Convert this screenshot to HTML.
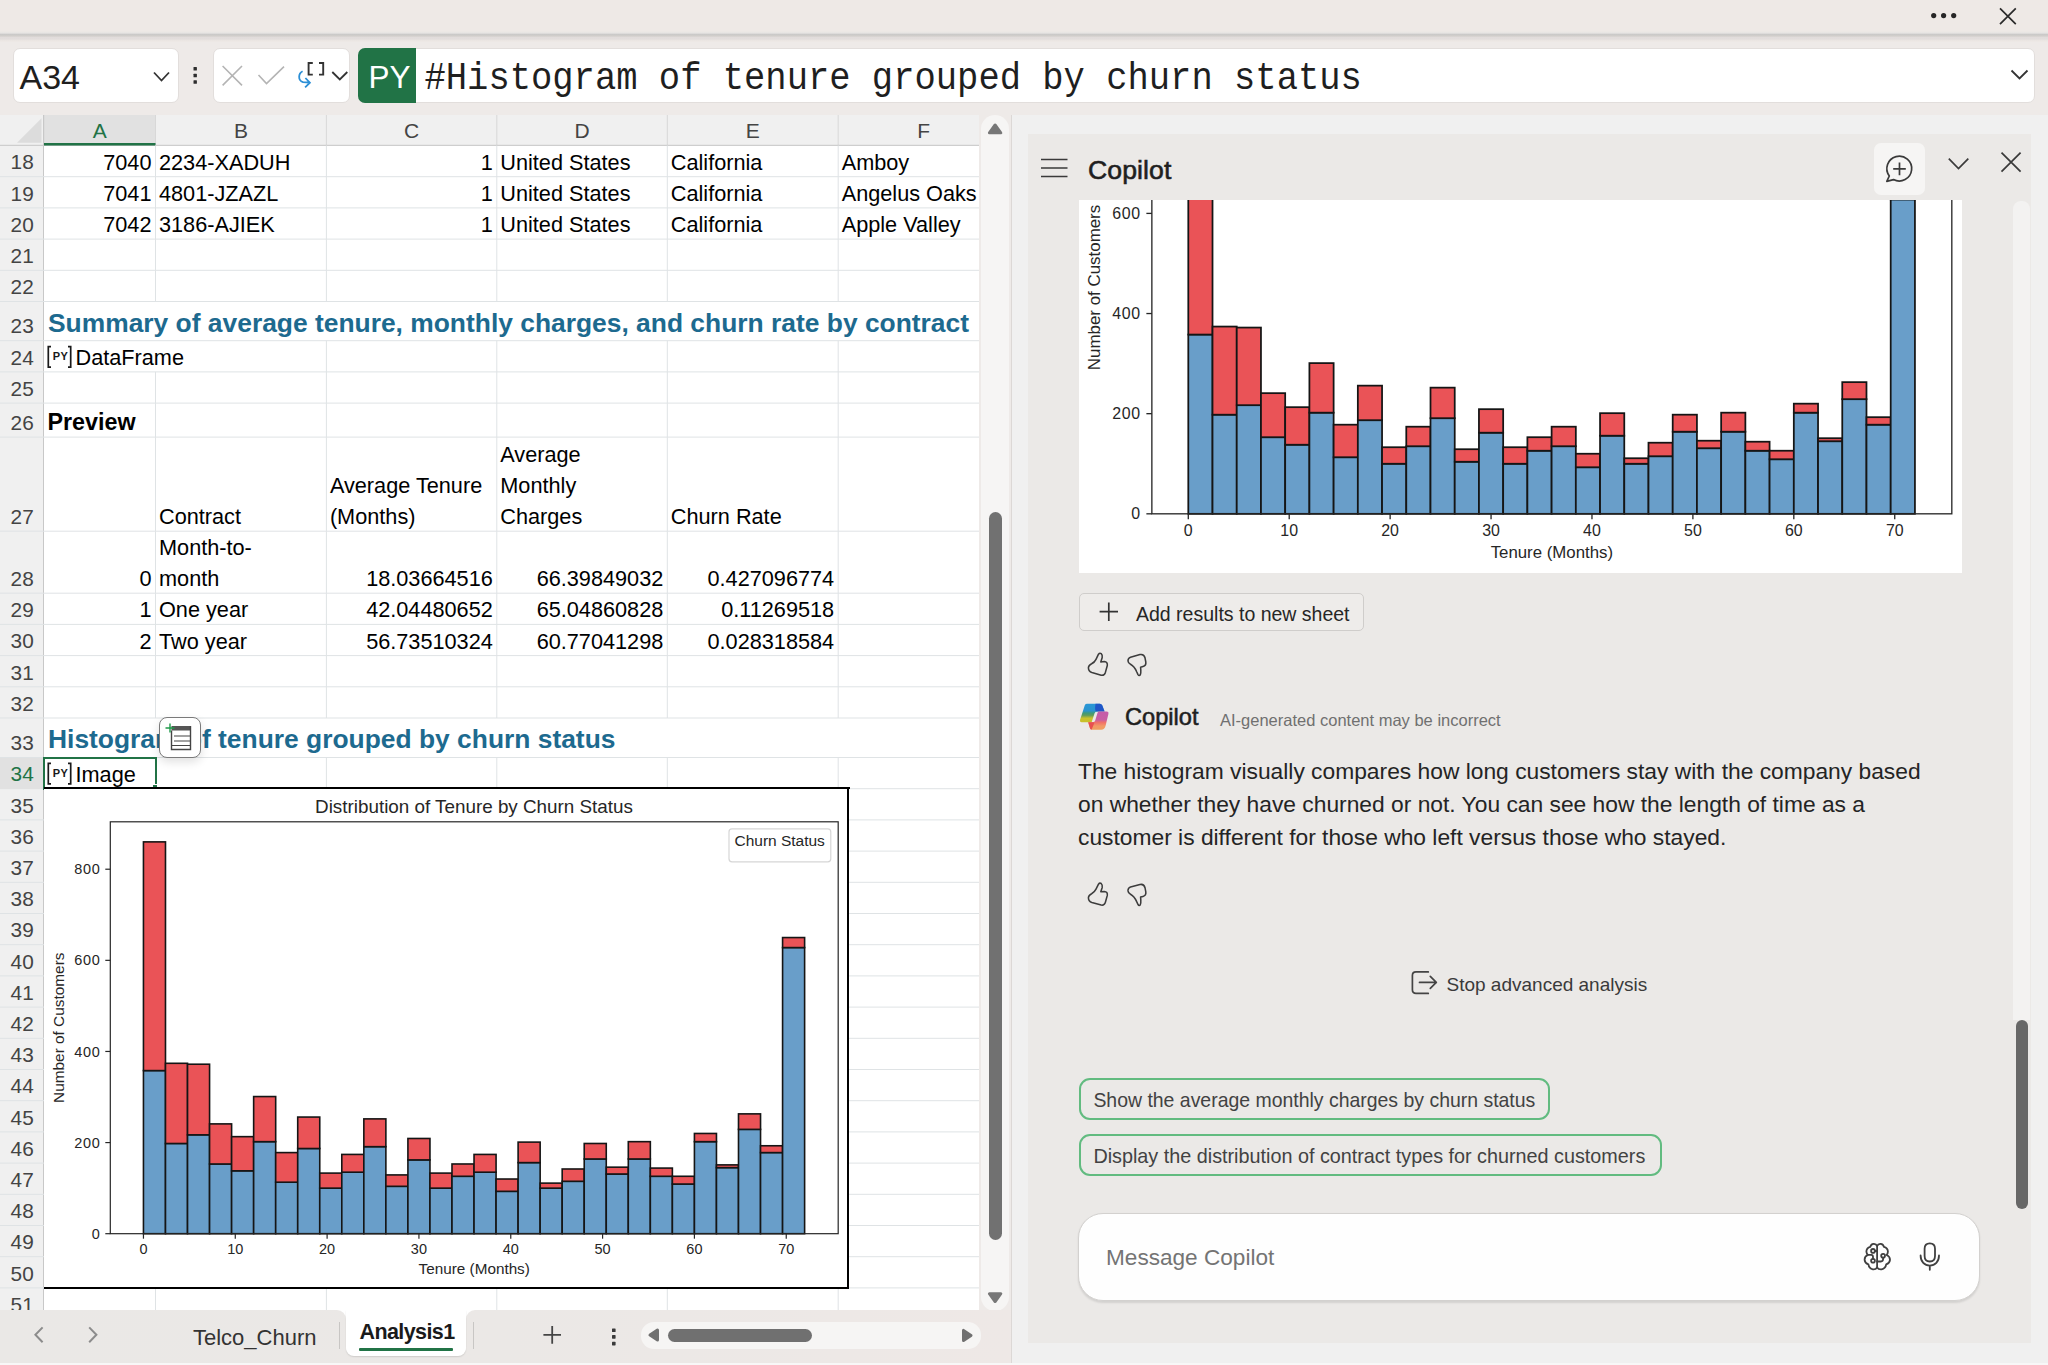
<!DOCTYPE html><html><head><meta charset="utf-8"><style>
html,body{margin:0;padding:0;}
body{width:2048px;height:1365px;position:relative;overflow:hidden;background:#eeeae8;font-family:'Liberation Sans', sans-serif;}
div{box-sizing:border-box;}
svg{position:absolute;overflow:visible;}
</style></head><body>
<div style="position:absolute;left:0px;top:0px;width:2048px;height:31px;background:#eee9e6;"></div>
<div style="position:absolute;left:0px;top:31px;width:2048px;height:11px;background:linear-gradient(#eee9e6 0px,#e6e4e3 2px,#c9c8c7 3.6px,#d3cfcc 5px,#e1dcdb 6.5px,#e2dddc 8px,#ede8e5 10px);"></div>
<svg style="left:0;top:0" width="2048" height="42">
<circle cx="1933.7" cy="15.6" r="2.6" fill="#262626"/><circle cx="1943.6" cy="15.6" r="2.6" fill="#262626"/><circle cx="1953.7" cy="15.6" r="2.6" fill="#262626"/>
<path d="M2000 8.3 L2015.8 24.2 M2015.8 8.3 L2000 24.2" stroke="#2b2b2b" stroke-width="1.7" fill="none"/>
</svg>
<div style="position:absolute;left:13.3px;top:48px;width:165.5px;height:55px;background:#fff;border:1px solid #e2dedc;border-radius:7px;"></div>
<div style="position:absolute;left:19.5px;top:60.01px;font:normal 34px 'Liberation Sans', sans-serif;color:#1f1f1f;white-space:pre;line-height:1;">A34</div>
<svg style="left:0;top:0" width="420" height="110">
<path d="M154 72.5 L161.5 80.5 L169 72.5" stroke="#333" stroke-width="1.8" fill="none"/>
<rect x="193.5" y="67.1" width="3.4" height="3.4" rx="0.5" fill="#2e2e2e"/><rect x="193.5" y="73.8" width="3.4" height="3.4" rx="0.5" fill="#2e2e2e"/><rect x="193.5" y="80.3" width="3.4" height="3.4" rx="0.5" fill="#2e2e2e"/>
</svg>
<div style="position:absolute;left:212.7px;top:48px;width:137px;height:55px;background:#fff;border:1px solid #e2dedc;border-radius:7px;"></div>
<svg style="left:0;top:0" width="420" height="110">
<path d="M222.6 66 L242 85.4 M242 66 L222.6 85.4" stroke="#b4b4b4" stroke-width="1.6" fill="none"/>
<path d="M258.5 75 L266.5 83.5 L284 66.6" stroke="#b4b4b4" stroke-width="1.6" fill="none"/>
<path d="M302.6 71.3 C298.3 73.5 297.6 80.3 303 82.2 L309.8 82.7 M305.4 78 L309.9 82.7 L305.1 87.3" stroke="#2b8fd6" stroke-width="1.8" fill="none"/>
<path d="M312.8 63 L308.6 63 L308.6 74.6 L312.8 74.6 M319 63 L323.2 63 L323.2 74.6 L319 74.6" stroke="#333" stroke-width="1.9" fill="none"/>
<path d="M332.3 72 L339.8 79.5 L347.3 72" stroke="#333" stroke-width="1.8" fill="none"/>
</svg>
<div style="position:absolute;left:357.9px;top:47.8px;width:1677px;height:55.2px;background:#fff;border:1px solid #e2dedc;border-radius:7px;"></div>
<div style="position:absolute;left:357.9px;top:47.8px;width:58.1px;height:55.2px;background:#217346;border-radius:7px 0 0 7px;"></div>
<div style="position:absolute;left:368.5px;top:61.73px;font:normal 31.5px 'Liberation Sans', sans-serif;color:#fff;white-space:pre;line-height:1;">PY</div>
<div style="position:absolute;left:424.5px;top:62.0px;font:normal 35.5px 'Liberation Mono', monospace;color:#1f1f1f;white-space:pre;line-height:1;transform:scaleY(1.08);transform-origin:0 27.2px;">#Histogram of tenure grouped by churn status</div>
<svg style="left:0;top:0" width="2048" height="110">
<path d="M2011.5 70.5 L2019.5 78.5 L2027.5 70.5" stroke="#333" stroke-width="1.8" fill="none"/>
</svg>
<div style="position:absolute;left:0px;top:115px;width:979px;height:1195px;background:#fff;overflow:hidden;"></div>
<div style="position:absolute;left:0px;top:115px;width:979px;height:30.5px;background:#f0f0f0;"></div>
<div style="position:absolute;left:0px;top:145.5px;width:44px;height:1164.5px;background:#f0f0f0;"></div>
<div style="position:absolute;left:44px;top:115px;width:111.5px;height:30.5px;background:#e1e1e1;"></div>
<svg style="left:0;top:0" width="60" height="150"><path d="M41.5 118.3 L41.5 142.7 L17 142.7 Z" fill="#dcdcdc"/></svg>
<svg style="left:0;top:0;overflow:hidden" width="979" height="1310">
<line x1="44" y1="115" x2="44" y2="145.5" stroke="#d8d8d8" stroke-width="1"/>
<line x1="155.5" y1="115" x2="155.5" y2="145.5" stroke="#d8d8d8" stroke-width="1"/>
<line x1="326.4" y1="115" x2="326.4" y2="145.5" stroke="#d8d8d8" stroke-width="1"/>
<line x1="496.8" y1="115" x2="496.8" y2="145.5" stroke="#d8d8d8" stroke-width="1"/>
<line x1="667.3" y1="115" x2="667.3" y2="145.5" stroke="#d8d8d8" stroke-width="1"/>
<line x1="838.2" y1="115" x2="838.2" y2="145.5" stroke="#d8d8d8" stroke-width="1"/>
<line x1="0" y1="145.3" x2="979" y2="145.3" stroke="#c6c6c6" stroke-width="1"/>
<rect x="44" y="143.0" width="111.5" height="2.5" fill="#217346"/>
<line x1="43.5" y1="115" x2="43.5" y2="1310" stroke="#c8c8c8" stroke-width="1"/>
<line x1="0" y1="176.7" x2="979" y2="176.7" stroke="#dfe3e5" stroke-width="1"/>
<line x1="0" y1="207.89999999999998" x2="979" y2="207.89999999999998" stroke="#dfe3e5" stroke-width="1"/>
<line x1="0" y1="239.09999999999997" x2="979" y2="239.09999999999997" stroke="#dfe3e5" stroke-width="1"/>
<line x1="0" y1="270.29999999999995" x2="979" y2="270.29999999999995" stroke="#dfe3e5" stroke-width="1"/>
<line x1="0" y1="301.49999999999994" x2="979" y2="301.49999999999994" stroke="#dfe3e5" stroke-width="1"/>
<line x1="0" y1="340.69999999999993" x2="979" y2="340.69999999999993" stroke="#dfe3e5" stroke-width="1"/>
<line x1="0" y1="371.8999999999999" x2="979" y2="371.8999999999999" stroke="#dfe3e5" stroke-width="1"/>
<line x1="0" y1="403.0999999999999" x2="979" y2="403.0999999999999" stroke="#dfe3e5" stroke-width="1"/>
<line x1="0" y1="437.0999999999999" x2="979" y2="437.0999999999999" stroke="#dfe3e5" stroke-width="1"/>
<line x1="0" y1="531.1999999999999" x2="979" y2="531.1999999999999" stroke="#dfe3e5" stroke-width="1"/>
<line x1="0" y1="593.1999999999999" x2="979" y2="593.1999999999999" stroke="#dfe3e5" stroke-width="1"/>
<line x1="0" y1="624.4" x2="979" y2="624.4" stroke="#dfe3e5" stroke-width="1"/>
<line x1="0" y1="655.6" x2="979" y2="655.6" stroke="#dfe3e5" stroke-width="1"/>
<line x1="0" y1="686.8000000000001" x2="979" y2="686.8000000000001" stroke="#dfe3e5" stroke-width="1"/>
<line x1="0" y1="718.0000000000001" x2="979" y2="718.0000000000001" stroke="#dfe3e5" stroke-width="1"/>
<line x1="0" y1="757.5000000000001" x2="979" y2="757.5000000000001" stroke="#dfe3e5" stroke-width="1"/>
<line x1="0" y1="788.7000000000002" x2="979" y2="788.7000000000002" stroke="#dfe3e5" stroke-width="1"/>
<line x1="0" y1="819.9000000000002" x2="979" y2="819.9000000000002" stroke="#dfe3e5" stroke-width="1"/>
<line x1="0" y1="851.1000000000003" x2="979" y2="851.1000000000003" stroke="#dfe3e5" stroke-width="1"/>
<line x1="0" y1="882.3000000000003" x2="979" y2="882.3000000000003" stroke="#dfe3e5" stroke-width="1"/>
<line x1="0" y1="913.5000000000003" x2="979" y2="913.5000000000003" stroke="#dfe3e5" stroke-width="1"/>
<line x1="0" y1="944.7000000000004" x2="979" y2="944.7000000000004" stroke="#dfe3e5" stroke-width="1"/>
<line x1="0" y1="975.9000000000004" x2="979" y2="975.9000000000004" stroke="#dfe3e5" stroke-width="1"/>
<line x1="0" y1="1007.1000000000005" x2="979" y2="1007.1000000000005" stroke="#dfe3e5" stroke-width="1"/>
<line x1="0" y1="1038.3000000000004" x2="979" y2="1038.3000000000004" stroke="#dfe3e5" stroke-width="1"/>
<line x1="0" y1="1069.5000000000005" x2="979" y2="1069.5000000000005" stroke="#dfe3e5" stroke-width="1"/>
<line x1="0" y1="1100.7000000000005" x2="979" y2="1100.7000000000005" stroke="#dfe3e5" stroke-width="1"/>
<line x1="0" y1="1131.9000000000005" x2="979" y2="1131.9000000000005" stroke="#dfe3e5" stroke-width="1"/>
<line x1="0" y1="1163.1000000000006" x2="979" y2="1163.1000000000006" stroke="#dfe3e5" stroke-width="1"/>
<line x1="0" y1="1194.3000000000006" x2="979" y2="1194.3000000000006" stroke="#dfe3e5" stroke-width="1"/>
<line x1="0" y1="1225.5000000000007" x2="979" y2="1225.5000000000007" stroke="#dfe3e5" stroke-width="1"/>
<line x1="0" y1="1256.7000000000007" x2="979" y2="1256.7000000000007" stroke="#dfe3e5" stroke-width="1"/>
<line x1="0" y1="1287.9000000000008" x2="979" y2="1287.9000000000008" stroke="#dfe3e5" stroke-width="1"/>
<line x1="0" y1="1319.1000000000008" x2="979" y2="1319.1000000000008" stroke="#dfe3e5" stroke-width="1"/>
<line x1="155.5" y1="145.5" x2="155.5" y2="176.7" stroke="#dfe3e5" stroke-width="1"/>
<line x1="326.4" y1="145.5" x2="326.4" y2="176.7" stroke="#dfe3e5" stroke-width="1"/>
<line x1="496.8" y1="145.5" x2="496.8" y2="176.7" stroke="#dfe3e5" stroke-width="1"/>
<line x1="667.3" y1="145.5" x2="667.3" y2="176.7" stroke="#dfe3e5" stroke-width="1"/>
<line x1="838.2" y1="145.5" x2="838.2" y2="176.7" stroke="#dfe3e5" stroke-width="1"/>
<line x1="155.5" y1="176.7" x2="155.5" y2="207.89999999999998" stroke="#dfe3e5" stroke-width="1"/>
<line x1="326.4" y1="176.7" x2="326.4" y2="207.89999999999998" stroke="#dfe3e5" stroke-width="1"/>
<line x1="496.8" y1="176.7" x2="496.8" y2="207.89999999999998" stroke="#dfe3e5" stroke-width="1"/>
<line x1="667.3" y1="176.7" x2="667.3" y2="207.89999999999998" stroke="#dfe3e5" stroke-width="1"/>
<line x1="838.2" y1="176.7" x2="838.2" y2="207.89999999999998" stroke="#dfe3e5" stroke-width="1"/>
<line x1="155.5" y1="207.89999999999998" x2="155.5" y2="239.09999999999997" stroke="#dfe3e5" stroke-width="1"/>
<line x1="326.4" y1="207.89999999999998" x2="326.4" y2="239.09999999999997" stroke="#dfe3e5" stroke-width="1"/>
<line x1="496.8" y1="207.89999999999998" x2="496.8" y2="239.09999999999997" stroke="#dfe3e5" stroke-width="1"/>
<line x1="667.3" y1="207.89999999999998" x2="667.3" y2="239.09999999999997" stroke="#dfe3e5" stroke-width="1"/>
<line x1="838.2" y1="207.89999999999998" x2="838.2" y2="239.09999999999997" stroke="#dfe3e5" stroke-width="1"/>
<line x1="155.5" y1="239.09999999999997" x2="155.5" y2="270.29999999999995" stroke="#dfe3e5" stroke-width="1"/>
<line x1="326.4" y1="239.09999999999997" x2="326.4" y2="270.29999999999995" stroke="#dfe3e5" stroke-width="1"/>
<line x1="496.8" y1="239.09999999999997" x2="496.8" y2="270.29999999999995" stroke="#dfe3e5" stroke-width="1"/>
<line x1="667.3" y1="239.09999999999997" x2="667.3" y2="270.29999999999995" stroke="#dfe3e5" stroke-width="1"/>
<line x1="838.2" y1="239.09999999999997" x2="838.2" y2="270.29999999999995" stroke="#dfe3e5" stroke-width="1"/>
<line x1="155.5" y1="270.29999999999995" x2="155.5" y2="301.49999999999994" stroke="#dfe3e5" stroke-width="1"/>
<line x1="326.4" y1="270.29999999999995" x2="326.4" y2="301.49999999999994" stroke="#dfe3e5" stroke-width="1"/>
<line x1="496.8" y1="270.29999999999995" x2="496.8" y2="301.49999999999994" stroke="#dfe3e5" stroke-width="1"/>
<line x1="667.3" y1="270.29999999999995" x2="667.3" y2="301.49999999999994" stroke="#dfe3e5" stroke-width="1"/>
<line x1="838.2" y1="270.29999999999995" x2="838.2" y2="301.49999999999994" stroke="#dfe3e5" stroke-width="1"/>
<line x1="326.4" y1="340.69999999999993" x2="326.4" y2="371.8999999999999" stroke="#dfe3e5" stroke-width="1"/>
<line x1="496.8" y1="340.69999999999993" x2="496.8" y2="371.8999999999999" stroke="#dfe3e5" stroke-width="1"/>
<line x1="667.3" y1="340.69999999999993" x2="667.3" y2="371.8999999999999" stroke="#dfe3e5" stroke-width="1"/>
<line x1="838.2" y1="340.69999999999993" x2="838.2" y2="371.8999999999999" stroke="#dfe3e5" stroke-width="1"/>
<line x1="155.5" y1="371.8999999999999" x2="155.5" y2="403.0999999999999" stroke="#dfe3e5" stroke-width="1"/>
<line x1="326.4" y1="371.8999999999999" x2="326.4" y2="403.0999999999999" stroke="#dfe3e5" stroke-width="1"/>
<line x1="496.8" y1="371.8999999999999" x2="496.8" y2="403.0999999999999" stroke="#dfe3e5" stroke-width="1"/>
<line x1="667.3" y1="371.8999999999999" x2="667.3" y2="403.0999999999999" stroke="#dfe3e5" stroke-width="1"/>
<line x1="838.2" y1="371.8999999999999" x2="838.2" y2="403.0999999999999" stroke="#dfe3e5" stroke-width="1"/>
<line x1="155.5" y1="403.0999999999999" x2="155.5" y2="437.0999999999999" stroke="#dfe3e5" stroke-width="1"/>
<line x1="326.4" y1="403.0999999999999" x2="326.4" y2="437.0999999999999" stroke="#dfe3e5" stroke-width="1"/>
<line x1="496.8" y1="403.0999999999999" x2="496.8" y2="437.0999999999999" stroke="#dfe3e5" stroke-width="1"/>
<line x1="667.3" y1="403.0999999999999" x2="667.3" y2="437.0999999999999" stroke="#dfe3e5" stroke-width="1"/>
<line x1="838.2" y1="403.0999999999999" x2="838.2" y2="437.0999999999999" stroke="#dfe3e5" stroke-width="1"/>
<line x1="155.5" y1="437.0999999999999" x2="155.5" y2="531.1999999999999" stroke="#dfe3e5" stroke-width="1"/>
<line x1="326.4" y1="437.0999999999999" x2="326.4" y2="531.1999999999999" stroke="#dfe3e5" stroke-width="1"/>
<line x1="496.8" y1="437.0999999999999" x2="496.8" y2="531.1999999999999" stroke="#dfe3e5" stroke-width="1"/>
<line x1="667.3" y1="437.0999999999999" x2="667.3" y2="531.1999999999999" stroke="#dfe3e5" stroke-width="1"/>
<line x1="838.2" y1="437.0999999999999" x2="838.2" y2="531.1999999999999" stroke="#dfe3e5" stroke-width="1"/>
<line x1="155.5" y1="531.1999999999999" x2="155.5" y2="593.1999999999999" stroke="#dfe3e5" stroke-width="1"/>
<line x1="326.4" y1="531.1999999999999" x2="326.4" y2="593.1999999999999" stroke="#dfe3e5" stroke-width="1"/>
<line x1="496.8" y1="531.1999999999999" x2="496.8" y2="593.1999999999999" stroke="#dfe3e5" stroke-width="1"/>
<line x1="667.3" y1="531.1999999999999" x2="667.3" y2="593.1999999999999" stroke="#dfe3e5" stroke-width="1"/>
<line x1="838.2" y1="531.1999999999999" x2="838.2" y2="593.1999999999999" stroke="#dfe3e5" stroke-width="1"/>
<line x1="155.5" y1="593.1999999999999" x2="155.5" y2="624.4" stroke="#dfe3e5" stroke-width="1"/>
<line x1="326.4" y1="593.1999999999999" x2="326.4" y2="624.4" stroke="#dfe3e5" stroke-width="1"/>
<line x1="496.8" y1="593.1999999999999" x2="496.8" y2="624.4" stroke="#dfe3e5" stroke-width="1"/>
<line x1="667.3" y1="593.1999999999999" x2="667.3" y2="624.4" stroke="#dfe3e5" stroke-width="1"/>
<line x1="838.2" y1="593.1999999999999" x2="838.2" y2="624.4" stroke="#dfe3e5" stroke-width="1"/>
<line x1="155.5" y1="624.4" x2="155.5" y2="655.6" stroke="#dfe3e5" stroke-width="1"/>
<line x1="326.4" y1="624.4" x2="326.4" y2="655.6" stroke="#dfe3e5" stroke-width="1"/>
<line x1="496.8" y1="624.4" x2="496.8" y2="655.6" stroke="#dfe3e5" stroke-width="1"/>
<line x1="667.3" y1="624.4" x2="667.3" y2="655.6" stroke="#dfe3e5" stroke-width="1"/>
<line x1="838.2" y1="624.4" x2="838.2" y2="655.6" stroke="#dfe3e5" stroke-width="1"/>
<line x1="155.5" y1="655.6" x2="155.5" y2="686.8000000000001" stroke="#dfe3e5" stroke-width="1"/>
<line x1="326.4" y1="655.6" x2="326.4" y2="686.8000000000001" stroke="#dfe3e5" stroke-width="1"/>
<line x1="496.8" y1="655.6" x2="496.8" y2="686.8000000000001" stroke="#dfe3e5" stroke-width="1"/>
<line x1="667.3" y1="655.6" x2="667.3" y2="686.8000000000001" stroke="#dfe3e5" stroke-width="1"/>
<line x1="838.2" y1="655.6" x2="838.2" y2="686.8000000000001" stroke="#dfe3e5" stroke-width="1"/>
<line x1="155.5" y1="686.8000000000001" x2="155.5" y2="718.0000000000001" stroke="#dfe3e5" stroke-width="1"/>
<line x1="326.4" y1="686.8000000000001" x2="326.4" y2="718.0000000000001" stroke="#dfe3e5" stroke-width="1"/>
<line x1="496.8" y1="686.8000000000001" x2="496.8" y2="718.0000000000001" stroke="#dfe3e5" stroke-width="1"/>
<line x1="667.3" y1="686.8000000000001" x2="667.3" y2="718.0000000000001" stroke="#dfe3e5" stroke-width="1"/>
<line x1="838.2" y1="686.8000000000001" x2="838.2" y2="718.0000000000001" stroke="#dfe3e5" stroke-width="1"/>
<line x1="155.5" y1="757.5000000000001" x2="155.5" y2="788.7000000000002" stroke="#dfe3e5" stroke-width="1"/>
<line x1="326.4" y1="757.5000000000001" x2="326.4" y2="788.7000000000002" stroke="#dfe3e5" stroke-width="1"/>
<line x1="496.8" y1="757.5000000000001" x2="496.8" y2="788.7000000000002" stroke="#dfe3e5" stroke-width="1"/>
<line x1="667.3" y1="757.5000000000001" x2="667.3" y2="788.7000000000002" stroke="#dfe3e5" stroke-width="1"/>
<line x1="838.2" y1="757.5000000000001" x2="838.2" y2="788.7000000000002" stroke="#dfe3e5" stroke-width="1"/>
<line x1="155.5" y1="788.7000000000002" x2="155.5" y2="819.9000000000002" stroke="#dfe3e5" stroke-width="1"/>
<line x1="326.4" y1="788.7000000000002" x2="326.4" y2="819.9000000000002" stroke="#dfe3e5" stroke-width="1"/>
<line x1="496.8" y1="788.7000000000002" x2="496.8" y2="819.9000000000002" stroke="#dfe3e5" stroke-width="1"/>
<line x1="667.3" y1="788.7000000000002" x2="667.3" y2="819.9000000000002" stroke="#dfe3e5" stroke-width="1"/>
<line x1="838.2" y1="788.7000000000002" x2="838.2" y2="819.9000000000002" stroke="#dfe3e5" stroke-width="1"/>
<line x1="155.5" y1="819.9000000000002" x2="155.5" y2="851.1000000000003" stroke="#dfe3e5" stroke-width="1"/>
<line x1="326.4" y1="819.9000000000002" x2="326.4" y2="851.1000000000003" stroke="#dfe3e5" stroke-width="1"/>
<line x1="496.8" y1="819.9000000000002" x2="496.8" y2="851.1000000000003" stroke="#dfe3e5" stroke-width="1"/>
<line x1="667.3" y1="819.9000000000002" x2="667.3" y2="851.1000000000003" stroke="#dfe3e5" stroke-width="1"/>
<line x1="838.2" y1="819.9000000000002" x2="838.2" y2="851.1000000000003" stroke="#dfe3e5" stroke-width="1"/>
<line x1="155.5" y1="851.1000000000003" x2="155.5" y2="882.3000000000003" stroke="#dfe3e5" stroke-width="1"/>
<line x1="326.4" y1="851.1000000000003" x2="326.4" y2="882.3000000000003" stroke="#dfe3e5" stroke-width="1"/>
<line x1="496.8" y1="851.1000000000003" x2="496.8" y2="882.3000000000003" stroke="#dfe3e5" stroke-width="1"/>
<line x1="667.3" y1="851.1000000000003" x2="667.3" y2="882.3000000000003" stroke="#dfe3e5" stroke-width="1"/>
<line x1="838.2" y1="851.1000000000003" x2="838.2" y2="882.3000000000003" stroke="#dfe3e5" stroke-width="1"/>
<line x1="155.5" y1="882.3000000000003" x2="155.5" y2="913.5000000000003" stroke="#dfe3e5" stroke-width="1"/>
<line x1="326.4" y1="882.3000000000003" x2="326.4" y2="913.5000000000003" stroke="#dfe3e5" stroke-width="1"/>
<line x1="496.8" y1="882.3000000000003" x2="496.8" y2="913.5000000000003" stroke="#dfe3e5" stroke-width="1"/>
<line x1="667.3" y1="882.3000000000003" x2="667.3" y2="913.5000000000003" stroke="#dfe3e5" stroke-width="1"/>
<line x1="838.2" y1="882.3000000000003" x2="838.2" y2="913.5000000000003" stroke="#dfe3e5" stroke-width="1"/>
<line x1="155.5" y1="913.5000000000003" x2="155.5" y2="944.7000000000004" stroke="#dfe3e5" stroke-width="1"/>
<line x1="326.4" y1="913.5000000000003" x2="326.4" y2="944.7000000000004" stroke="#dfe3e5" stroke-width="1"/>
<line x1="496.8" y1="913.5000000000003" x2="496.8" y2="944.7000000000004" stroke="#dfe3e5" stroke-width="1"/>
<line x1="667.3" y1="913.5000000000003" x2="667.3" y2="944.7000000000004" stroke="#dfe3e5" stroke-width="1"/>
<line x1="838.2" y1="913.5000000000003" x2="838.2" y2="944.7000000000004" stroke="#dfe3e5" stroke-width="1"/>
<line x1="155.5" y1="944.7000000000004" x2="155.5" y2="975.9000000000004" stroke="#dfe3e5" stroke-width="1"/>
<line x1="326.4" y1="944.7000000000004" x2="326.4" y2="975.9000000000004" stroke="#dfe3e5" stroke-width="1"/>
<line x1="496.8" y1="944.7000000000004" x2="496.8" y2="975.9000000000004" stroke="#dfe3e5" stroke-width="1"/>
<line x1="667.3" y1="944.7000000000004" x2="667.3" y2="975.9000000000004" stroke="#dfe3e5" stroke-width="1"/>
<line x1="838.2" y1="944.7000000000004" x2="838.2" y2="975.9000000000004" stroke="#dfe3e5" stroke-width="1"/>
<line x1="155.5" y1="975.9000000000004" x2="155.5" y2="1007.1000000000005" stroke="#dfe3e5" stroke-width="1"/>
<line x1="326.4" y1="975.9000000000004" x2="326.4" y2="1007.1000000000005" stroke="#dfe3e5" stroke-width="1"/>
<line x1="496.8" y1="975.9000000000004" x2="496.8" y2="1007.1000000000005" stroke="#dfe3e5" stroke-width="1"/>
<line x1="667.3" y1="975.9000000000004" x2="667.3" y2="1007.1000000000005" stroke="#dfe3e5" stroke-width="1"/>
<line x1="838.2" y1="975.9000000000004" x2="838.2" y2="1007.1000000000005" stroke="#dfe3e5" stroke-width="1"/>
<line x1="155.5" y1="1007.1000000000005" x2="155.5" y2="1038.3000000000004" stroke="#dfe3e5" stroke-width="1"/>
<line x1="326.4" y1="1007.1000000000005" x2="326.4" y2="1038.3000000000004" stroke="#dfe3e5" stroke-width="1"/>
<line x1="496.8" y1="1007.1000000000005" x2="496.8" y2="1038.3000000000004" stroke="#dfe3e5" stroke-width="1"/>
<line x1="667.3" y1="1007.1000000000005" x2="667.3" y2="1038.3000000000004" stroke="#dfe3e5" stroke-width="1"/>
<line x1="838.2" y1="1007.1000000000005" x2="838.2" y2="1038.3000000000004" stroke="#dfe3e5" stroke-width="1"/>
<line x1="155.5" y1="1038.3000000000004" x2="155.5" y2="1069.5000000000005" stroke="#dfe3e5" stroke-width="1"/>
<line x1="326.4" y1="1038.3000000000004" x2="326.4" y2="1069.5000000000005" stroke="#dfe3e5" stroke-width="1"/>
<line x1="496.8" y1="1038.3000000000004" x2="496.8" y2="1069.5000000000005" stroke="#dfe3e5" stroke-width="1"/>
<line x1="667.3" y1="1038.3000000000004" x2="667.3" y2="1069.5000000000005" stroke="#dfe3e5" stroke-width="1"/>
<line x1="838.2" y1="1038.3000000000004" x2="838.2" y2="1069.5000000000005" stroke="#dfe3e5" stroke-width="1"/>
<line x1="155.5" y1="1069.5000000000005" x2="155.5" y2="1100.7000000000005" stroke="#dfe3e5" stroke-width="1"/>
<line x1="326.4" y1="1069.5000000000005" x2="326.4" y2="1100.7000000000005" stroke="#dfe3e5" stroke-width="1"/>
<line x1="496.8" y1="1069.5000000000005" x2="496.8" y2="1100.7000000000005" stroke="#dfe3e5" stroke-width="1"/>
<line x1="667.3" y1="1069.5000000000005" x2="667.3" y2="1100.7000000000005" stroke="#dfe3e5" stroke-width="1"/>
<line x1="838.2" y1="1069.5000000000005" x2="838.2" y2="1100.7000000000005" stroke="#dfe3e5" stroke-width="1"/>
<line x1="155.5" y1="1100.7000000000005" x2="155.5" y2="1131.9000000000005" stroke="#dfe3e5" stroke-width="1"/>
<line x1="326.4" y1="1100.7000000000005" x2="326.4" y2="1131.9000000000005" stroke="#dfe3e5" stroke-width="1"/>
<line x1="496.8" y1="1100.7000000000005" x2="496.8" y2="1131.9000000000005" stroke="#dfe3e5" stroke-width="1"/>
<line x1="667.3" y1="1100.7000000000005" x2="667.3" y2="1131.9000000000005" stroke="#dfe3e5" stroke-width="1"/>
<line x1="838.2" y1="1100.7000000000005" x2="838.2" y2="1131.9000000000005" stroke="#dfe3e5" stroke-width="1"/>
<line x1="155.5" y1="1131.9000000000005" x2="155.5" y2="1163.1000000000006" stroke="#dfe3e5" stroke-width="1"/>
<line x1="326.4" y1="1131.9000000000005" x2="326.4" y2="1163.1000000000006" stroke="#dfe3e5" stroke-width="1"/>
<line x1="496.8" y1="1131.9000000000005" x2="496.8" y2="1163.1000000000006" stroke="#dfe3e5" stroke-width="1"/>
<line x1="667.3" y1="1131.9000000000005" x2="667.3" y2="1163.1000000000006" stroke="#dfe3e5" stroke-width="1"/>
<line x1="838.2" y1="1131.9000000000005" x2="838.2" y2="1163.1000000000006" stroke="#dfe3e5" stroke-width="1"/>
<line x1="155.5" y1="1163.1000000000006" x2="155.5" y2="1194.3000000000006" stroke="#dfe3e5" stroke-width="1"/>
<line x1="326.4" y1="1163.1000000000006" x2="326.4" y2="1194.3000000000006" stroke="#dfe3e5" stroke-width="1"/>
<line x1="496.8" y1="1163.1000000000006" x2="496.8" y2="1194.3000000000006" stroke="#dfe3e5" stroke-width="1"/>
<line x1="667.3" y1="1163.1000000000006" x2="667.3" y2="1194.3000000000006" stroke="#dfe3e5" stroke-width="1"/>
<line x1="838.2" y1="1163.1000000000006" x2="838.2" y2="1194.3000000000006" stroke="#dfe3e5" stroke-width="1"/>
<line x1="155.5" y1="1194.3000000000006" x2="155.5" y2="1225.5000000000007" stroke="#dfe3e5" stroke-width="1"/>
<line x1="326.4" y1="1194.3000000000006" x2="326.4" y2="1225.5000000000007" stroke="#dfe3e5" stroke-width="1"/>
<line x1="496.8" y1="1194.3000000000006" x2="496.8" y2="1225.5000000000007" stroke="#dfe3e5" stroke-width="1"/>
<line x1="667.3" y1="1194.3000000000006" x2="667.3" y2="1225.5000000000007" stroke="#dfe3e5" stroke-width="1"/>
<line x1="838.2" y1="1194.3000000000006" x2="838.2" y2="1225.5000000000007" stroke="#dfe3e5" stroke-width="1"/>
<line x1="155.5" y1="1225.5000000000007" x2="155.5" y2="1256.7000000000007" stroke="#dfe3e5" stroke-width="1"/>
<line x1="326.4" y1="1225.5000000000007" x2="326.4" y2="1256.7000000000007" stroke="#dfe3e5" stroke-width="1"/>
<line x1="496.8" y1="1225.5000000000007" x2="496.8" y2="1256.7000000000007" stroke="#dfe3e5" stroke-width="1"/>
<line x1="667.3" y1="1225.5000000000007" x2="667.3" y2="1256.7000000000007" stroke="#dfe3e5" stroke-width="1"/>
<line x1="838.2" y1="1225.5000000000007" x2="838.2" y2="1256.7000000000007" stroke="#dfe3e5" stroke-width="1"/>
<line x1="155.5" y1="1256.7000000000007" x2="155.5" y2="1287.9000000000008" stroke="#dfe3e5" stroke-width="1"/>
<line x1="326.4" y1="1256.7000000000007" x2="326.4" y2="1287.9000000000008" stroke="#dfe3e5" stroke-width="1"/>
<line x1="496.8" y1="1256.7000000000007" x2="496.8" y2="1287.9000000000008" stroke="#dfe3e5" stroke-width="1"/>
<line x1="667.3" y1="1256.7000000000007" x2="667.3" y2="1287.9000000000008" stroke="#dfe3e5" stroke-width="1"/>
<line x1="838.2" y1="1256.7000000000007" x2="838.2" y2="1287.9000000000008" stroke="#dfe3e5" stroke-width="1"/>
<line x1="155.5" y1="1287.9000000000008" x2="155.5" y2="1319.1000000000008" stroke="#dfe3e5" stroke-width="1"/>
<line x1="326.4" y1="1287.9000000000008" x2="326.4" y2="1319.1000000000008" stroke="#dfe3e5" stroke-width="1"/>
<line x1="496.8" y1="1287.9000000000008" x2="496.8" y2="1319.1000000000008" stroke="#dfe3e5" stroke-width="1"/>
<line x1="667.3" y1="1287.9000000000008" x2="667.3" y2="1319.1000000000008" stroke="#dfe3e5" stroke-width="1"/>
<line x1="838.2" y1="1287.9000000000008" x2="838.2" y2="1319.1000000000008" stroke="#dfe3e5" stroke-width="1"/>
</svg>
<div style="position:absolute;left:44px;top:115px;width:111.5px;height:30.5px;text-align:center;font:21px 'Liberation Sans', sans-serif;color:#217346;line-height:32.5px">A</div>
<div style="position:absolute;left:155.5px;top:115px;width:170.89999999999998px;height:30.5px;text-align:center;font:21px 'Liberation Sans', sans-serif;color:#444;line-height:32.5px">B</div>
<div style="position:absolute;left:326.4px;top:115px;width:170.40000000000003px;height:30.5px;text-align:center;font:21px 'Liberation Sans', sans-serif;color:#444;line-height:32.5px">C</div>
<div style="position:absolute;left:496.8px;top:115px;width:170.49999999999994px;height:30.5px;text-align:center;font:21px 'Liberation Sans', sans-serif;color:#444;line-height:32.5px">D</div>
<div style="position:absolute;left:667.3px;top:115px;width:170.9000000000001px;height:30.5px;text-align:center;font:21px 'Liberation Sans', sans-serif;color:#444;line-height:32.5px">E</div>
<div style="position:absolute;left:838.2px;top:115px;width:170.79999999999995px;height:30.5px;text-align:center;font:21px 'Liberation Sans', sans-serif;color:#444;line-height:32.5px">F</div>
<div style="position:absolute;left:10.6px;top:152.49px;font:normal 20.8px 'Liberation Sans', sans-serif;color:#444;white-space:pre;line-height:1;">18</div>
<div style="position:absolute;left:10.6px;top:183.69px;font:normal 20.8px 'Liberation Sans', sans-serif;color:#444;white-space:pre;line-height:1;">19</div>
<div style="position:absolute;left:10.6px;top:214.89px;font:normal 20.8px 'Liberation Sans', sans-serif;color:#444;white-space:pre;line-height:1;">20</div>
<div style="position:absolute;left:10.6px;top:246.09px;font:normal 20.8px 'Liberation Sans', sans-serif;color:#444;white-space:pre;line-height:1;">21</div>
<div style="position:absolute;left:10.6px;top:277.29px;font:normal 20.8px 'Liberation Sans', sans-serif;color:#444;white-space:pre;line-height:1;">22</div>
<div style="position:absolute;left:10.6px;top:316.49px;font:normal 20.8px 'Liberation Sans', sans-serif;color:#444;white-space:pre;line-height:1;">23</div>
<div style="position:absolute;left:10.6px;top:347.69px;font:normal 20.8px 'Liberation Sans', sans-serif;color:#444;white-space:pre;line-height:1;">24</div>
<div style="position:absolute;left:10.6px;top:378.89px;font:normal 20.8px 'Liberation Sans', sans-serif;color:#444;white-space:pre;line-height:1;">25</div>
<div style="position:absolute;left:10.6px;top:412.89px;font:normal 20.8px 'Liberation Sans', sans-serif;color:#444;white-space:pre;line-height:1;">26</div>
<div style="position:absolute;left:10.6px;top:506.99px;font:normal 20.8px 'Liberation Sans', sans-serif;color:#444;white-space:pre;line-height:1;">27</div>
<div style="position:absolute;left:10.6px;top:568.99px;font:normal 20.8px 'Liberation Sans', sans-serif;color:#444;white-space:pre;line-height:1;">28</div>
<div style="position:absolute;left:10.6px;top:600.19px;font:normal 20.8px 'Liberation Sans', sans-serif;color:#444;white-space:pre;line-height:1;">29</div>
<div style="position:absolute;left:10.6px;top:631.39px;font:normal 20.8px 'Liberation Sans', sans-serif;color:#444;white-space:pre;line-height:1;">30</div>
<div style="position:absolute;left:10.6px;top:662.59px;font:normal 20.8px 'Liberation Sans', sans-serif;color:#444;white-space:pre;line-height:1;">31</div>
<div style="position:absolute;left:10.6px;top:693.79px;font:normal 20.8px 'Liberation Sans', sans-serif;color:#444;white-space:pre;line-height:1;">32</div>
<div style="position:absolute;left:10.6px;top:733.29px;font:normal 20.8px 'Liberation Sans', sans-serif;color:#444;white-space:pre;line-height:1;">33</div>
<div style="position:absolute;left:0px;top:757.5000000000001px;width:43px;height:31.200000000000045px;background:#e1e1e1;"></div>
<div style="position:absolute;left:10.6px;top:764.49px;font:normal 20.8px 'Liberation Sans', sans-serif;color:#217346;white-space:pre;line-height:1;">34</div>
<div style="position:absolute;left:10.6px;top:795.69px;font:normal 20.8px 'Liberation Sans', sans-serif;color:#444;white-space:pre;line-height:1;">35</div>
<div style="position:absolute;left:10.6px;top:826.89px;font:normal 20.8px 'Liberation Sans', sans-serif;color:#444;white-space:pre;line-height:1;">36</div>
<div style="position:absolute;left:10.6px;top:858.09px;font:normal 20.8px 'Liberation Sans', sans-serif;color:#444;white-space:pre;line-height:1;">37</div>
<div style="position:absolute;left:10.6px;top:889.29px;font:normal 20.8px 'Liberation Sans', sans-serif;color:#444;white-space:pre;line-height:1;">38</div>
<div style="position:absolute;left:10.6px;top:920.49px;font:normal 20.8px 'Liberation Sans', sans-serif;color:#444;white-space:pre;line-height:1;">39</div>
<div style="position:absolute;left:10.6px;top:951.69px;font:normal 20.8px 'Liberation Sans', sans-serif;color:#444;white-space:pre;line-height:1;">40</div>
<div style="position:absolute;left:10.6px;top:982.89px;font:normal 20.8px 'Liberation Sans', sans-serif;color:#444;white-space:pre;line-height:1;">41</div>
<div style="position:absolute;left:10.6px;top:1014.09px;font:normal 20.8px 'Liberation Sans', sans-serif;color:#444;white-space:pre;line-height:1;">42</div>
<div style="position:absolute;left:10.6px;top:1045.29px;font:normal 20.8px 'Liberation Sans', sans-serif;color:#444;white-space:pre;line-height:1;">43</div>
<div style="position:absolute;left:10.6px;top:1076.49px;font:normal 20.8px 'Liberation Sans', sans-serif;color:#444;white-space:pre;line-height:1;">44</div>
<div style="position:absolute;left:10.6px;top:1107.69px;font:normal 20.8px 'Liberation Sans', sans-serif;color:#444;white-space:pre;line-height:1;">45</div>
<div style="position:absolute;left:10.6px;top:1138.89px;font:normal 20.8px 'Liberation Sans', sans-serif;color:#444;white-space:pre;line-height:1;">46</div>
<div style="position:absolute;left:10.6px;top:1170.09px;font:normal 20.8px 'Liberation Sans', sans-serif;color:#444;white-space:pre;line-height:1;">47</div>
<div style="position:absolute;left:10.6px;top:1201.29px;font:normal 20.8px 'Liberation Sans', sans-serif;color:#444;white-space:pre;line-height:1;">48</div>
<div style="position:absolute;left:10.6px;top:1232.49px;font:normal 20.8px 'Liberation Sans', sans-serif;color:#444;white-space:pre;line-height:1;">49</div>
<div style="position:absolute;left:10.6px;top:1263.69px;font:normal 20.8px 'Liberation Sans', sans-serif;color:#444;white-space:pre;line-height:1;">50</div>
<div style="position:absolute;left:10.6px;top:1294.89px;font:normal 20.8px 'Liberation Sans', sans-serif;color:#444;white-space:pre;line-height:1;">51</div>
<div style="position:absolute;left:44px;width:107.5px;top:151.73px;text-align:right;font:normal 21.7px 'Liberation Sans', sans-serif;color:#000;white-space:pre;line-height:1">7040</div>
<div style="position:absolute;left:159.0px;top:151.73px;font:normal 21.7px 'Liberation Sans', sans-serif;color:#000;white-space:pre;line-height:1;">2234-XADUH</div>
<div style="position:absolute;left:326.4px;width:166.40000000000003px;top:151.73px;text-align:right;font:normal 21.7px 'Liberation Sans', sans-serif;color:#000;white-space:pre;line-height:1">1</div>
<div style="position:absolute;left:500.3px;top:151.73px;font:normal 21.7px 'Liberation Sans', sans-serif;color:#000;white-space:pre;line-height:1;">United States</div>
<div style="position:absolute;left:670.8px;top:151.73px;font:normal 21.7px 'Liberation Sans', sans-serif;color:#000;white-space:pre;line-height:1;">California</div>
<div style="position:absolute;left:841.7px;top:151.73px;font:normal 21.7px 'Liberation Sans', sans-serif;color:#000;white-space:pre;line-height:1;">Amboy</div>
<div style="position:absolute;left:44px;width:107.5px;top:182.93px;text-align:right;font:normal 21.7px 'Liberation Sans', sans-serif;color:#000;white-space:pre;line-height:1">7041</div>
<div style="position:absolute;left:159.0px;top:182.93px;font:normal 21.7px 'Liberation Sans', sans-serif;color:#000;white-space:pre;line-height:1;">4801-JZAZL</div>
<div style="position:absolute;left:326.4px;width:166.40000000000003px;top:182.93px;text-align:right;font:normal 21.7px 'Liberation Sans', sans-serif;color:#000;white-space:pre;line-height:1">1</div>
<div style="position:absolute;left:500.3px;top:182.93px;font:normal 21.7px 'Liberation Sans', sans-serif;color:#000;white-space:pre;line-height:1;">United States</div>
<div style="position:absolute;left:670.8px;top:182.93px;font:normal 21.7px 'Liberation Sans', sans-serif;color:#000;white-space:pre;line-height:1;">California</div>
<div style="position:absolute;left:841.7px;top:182.93px;font:normal 21.7px 'Liberation Sans', sans-serif;color:#000;white-space:pre;line-height:1;">Angelus Oaks</div>
<div style="position:absolute;left:44px;width:107.5px;top:214.13px;text-align:right;font:normal 21.7px 'Liberation Sans', sans-serif;color:#000;white-space:pre;line-height:1">7042</div>
<div style="position:absolute;left:159.0px;top:214.13px;font:normal 21.7px 'Liberation Sans', sans-serif;color:#000;white-space:pre;line-height:1;">3186-AJIEK</div>
<div style="position:absolute;left:326.4px;width:166.40000000000003px;top:214.13px;text-align:right;font:normal 21.7px 'Liberation Sans', sans-serif;color:#000;white-space:pre;line-height:1">1</div>
<div style="position:absolute;left:500.3px;top:214.13px;font:normal 21.7px 'Liberation Sans', sans-serif;color:#000;white-space:pre;line-height:1;">United States</div>
<div style="position:absolute;left:670.8px;top:214.13px;font:normal 21.7px 'Liberation Sans', sans-serif;color:#000;white-space:pre;line-height:1;">California</div>
<div style="position:absolute;left:841.7px;top:214.13px;font:normal 21.7px 'Liberation Sans', sans-serif;color:#000;white-space:pre;line-height:1;">Apple Valley</div>
<div style="position:absolute;left:48.0px;top:309.55px;font:bold 26.4px 'Liberation Sans', sans-serif;color:#1d6a8f;white-space:pre;line-height:1;">Summary of average tenure, monthly charges, and churn rate by contract</div>
<svg style="left:0;top:0" width="200" height="900"><path d="M51 346.5999999999999 L48.3 346.5999999999999 L48.3 367.0999999999999 L51 367.0999999999999 M68 346.5999999999999 L70.7 346.5999999999999 L70.7 367.0999999999999 L68 367.0999999999999" stroke="#1a1a1a" stroke-width="1.7" fill="none"/></svg>
<div style="position:absolute;left:52.8px;top:351.49px;font:bold 11px 'Liberation Sans', sans-serif;color:#1a1a1a;white-space:pre;line-height:1;">P</div>
<div style="position:absolute;left:60.5px;top:351.49px;font:bold 11px 'Liberation Sans', sans-serif;color:#1a1a1a;white-space:pre;line-height:1;">Y</div>
<div style="position:absolute;left:75.5px;top:346.93px;font:normal 21.7px 'Liberation Sans', sans-serif;color:#000;white-space:pre;line-height:1;">DataFrame</div>
<div style="position:absolute;left:47.5px;top:410.77px;font:bold 23.3px 'Liberation Sans', sans-serif;color:#000;white-space:pre;line-height:1;">Preview</div>
<div style="position:absolute;left:159.0px;top:506.23px;font:normal 21.7px 'Liberation Sans', sans-serif;color:#000;white-space:pre;line-height:1;">Contract</div>
<div style="position:absolute;left:329.9px;top:475.03px;font:normal 21.7px 'Liberation Sans', sans-serif;color:#000;white-space:pre;line-height:1;">Average Tenure</div>
<div style="position:absolute;left:329.9px;top:506.23px;font:normal 21.7px 'Liberation Sans', sans-serif;color:#000;white-space:pre;line-height:1;">(Months)</div>
<div style="position:absolute;left:500.3px;top:443.83px;font:normal 21.7px 'Liberation Sans', sans-serif;color:#000;white-space:pre;line-height:1;">Average</div>
<div style="position:absolute;left:500.3px;top:475.03px;font:normal 21.7px 'Liberation Sans', sans-serif;color:#000;white-space:pre;line-height:1;">Monthly</div>
<div style="position:absolute;left:500.3px;top:506.23px;font:normal 21.7px 'Liberation Sans', sans-serif;color:#000;white-space:pre;line-height:1;">Charges</div>
<div style="position:absolute;left:670.8px;top:506.23px;font:normal 21.7px 'Liberation Sans', sans-serif;color:#000;white-space:pre;line-height:1;">Churn Rate</div>
<div style="position:absolute;left:44px;width:107.5px;top:568.23px;text-align:right;font:normal 21.7px 'Liberation Sans', sans-serif;color:#000;white-space:pre;line-height:1">0</div>
<div style="position:absolute;left:159.0px;top:537.03px;font:normal 21.7px 'Liberation Sans', sans-serif;color:#000;white-space:pre;line-height:1;">Month-to-</div>
<div style="position:absolute;left:159.0px;top:568.23px;font:normal 21.7px 'Liberation Sans', sans-serif;color:#000;white-space:pre;line-height:1;">month</div>
<div style="position:absolute;left:326.4px;width:166.40000000000003px;top:568.23px;text-align:right;font:normal 21.7px 'Liberation Sans', sans-serif;color:#000;white-space:pre;line-height:1">18.03664516</div>
<div style="position:absolute;left:496.8px;width:166.49999999999994px;top:568.23px;text-align:right;font:normal 21.7px 'Liberation Sans', sans-serif;color:#000;white-space:pre;line-height:1">66.39849032</div>
<div style="position:absolute;left:667.3px;width:166.9000000000001px;top:568.23px;text-align:right;font:normal 21.7px 'Liberation Sans', sans-serif;color:#000;white-space:pre;line-height:1">0.427096774</div>
<div style="position:absolute;left:44px;width:107.5px;top:599.43px;text-align:right;font:normal 21.7px 'Liberation Sans', sans-serif;color:#000;white-space:pre;line-height:1">1</div>
<div style="position:absolute;left:159.0px;top:599.43px;font:normal 21.7px 'Liberation Sans', sans-serif;color:#000;white-space:pre;line-height:1;">One year</div>
<div style="position:absolute;left:326.4px;width:166.40000000000003px;top:599.43px;text-align:right;font:normal 21.7px 'Liberation Sans', sans-serif;color:#000;white-space:pre;line-height:1">42.04480652</div>
<div style="position:absolute;left:496.8px;width:166.49999999999994px;top:599.43px;text-align:right;font:normal 21.7px 'Liberation Sans', sans-serif;color:#000;white-space:pre;line-height:1">65.04860828</div>
<div style="position:absolute;left:667.3px;width:166.9000000000001px;top:599.43px;text-align:right;font:normal 21.7px 'Liberation Sans', sans-serif;color:#000;white-space:pre;line-height:1">0.11269518</div>
<div style="position:absolute;left:44px;width:107.5px;top:630.63px;text-align:right;font:normal 21.7px 'Liberation Sans', sans-serif;color:#000;white-space:pre;line-height:1">2</div>
<div style="position:absolute;left:159.0px;top:630.63px;font:normal 21.7px 'Liberation Sans', sans-serif;color:#000;white-space:pre;line-height:1;">Two year</div>
<div style="position:absolute;left:326.4px;width:166.40000000000003px;top:630.63px;text-align:right;font:normal 21.7px 'Liberation Sans', sans-serif;color:#000;white-space:pre;line-height:1">56.73510324</div>
<div style="position:absolute;left:496.8px;width:166.49999999999994px;top:630.63px;text-align:right;font:normal 21.7px 'Liberation Sans', sans-serif;color:#000;white-space:pre;line-height:1">60.77041298</div>
<div style="position:absolute;left:667.3px;width:166.9000000000001px;top:630.63px;text-align:right;font:normal 21.7px 'Liberation Sans', sans-serif;color:#000;white-space:pre;line-height:1">0.028318584</div>
<div style="position:absolute;left:48.0px;top:726.35px;font:bold 26.4px 'Liberation Sans', sans-serif;color:#1d6a8f;white-space:pre;line-height:1;">Histogram of tenure grouped by churn status</div>
<svg style="left:0;top:0" width="200" height="900"><path d="M51 763.4000000000002 L48.3 763.4000000000002 L48.3 783.9000000000002 L51 783.9000000000002 M68 763.4000000000002 L70.7 763.4000000000002 L70.7 783.9000000000002 L68 783.9000000000002" stroke="#1a1a1a" stroke-width="1.7" fill="none"/></svg>
<div style="position:absolute;left:52.8px;top:768.29px;font:bold 11px 'Liberation Sans', sans-serif;color:#1a1a1a;white-space:pre;line-height:1;">P</div>
<div style="position:absolute;left:60.5px;top:768.29px;font:bold 11px 'Liberation Sans', sans-serif;color:#1a1a1a;white-space:pre;line-height:1;">Y</div>
<div style="position:absolute;left:75.5px;top:763.73px;font:normal 21.7px 'Liberation Sans', sans-serif;color:#000;white-space:pre;line-height:1;">Image</div>
<div style="position:absolute;left:43px;top:756.5000000000001px;width:114px;height:33.200000000000045px;border:2px solid #217346;"></div>
<div style="position:absolute;left:151.5px;top:784.2000000000002px;width:6px;height:6px;background:#217346;border:1px solid #fff;"></div>
<svg style="left:44px;top:787.6px;font-family:'Liberation Sans', sans-serif" width="804.7" height="500.4" viewBox="0 0 804.7 500.4"><rect x="0" y="0" width="804.7" height="500.4" fill="#fff"/>
<rect x="99.45" y="282.60" width="22.04" height="163.10" fill="#699ec9" stroke="#151515" stroke-width="1.6"/>
<rect x="99.45" y="53.88" width="22.04" height="228.71" fill="#ea5357" stroke="#151515" stroke-width="1.6"/>
<rect x="121.49" y="355.49" width="22.04" height="90.21" fill="#699ec9" stroke="#151515" stroke-width="1.6"/>
<rect x="121.49" y="275.31" width="22.04" height="80.19" fill="#ea5357" stroke="#151515" stroke-width="1.6"/>
<rect x="143.53" y="346.83" width="22.04" height="98.87" fill="#699ec9" stroke="#151515" stroke-width="1.6"/>
<rect x="143.53" y="276.22" width="22.04" height="70.62" fill="#ea5357" stroke="#151515" stroke-width="1.6"/>
<rect x="165.57" y="375.99" width="22.04" height="69.71" fill="#699ec9" stroke="#151515" stroke-width="1.6"/>
<rect x="165.57" y="335.90" width="22.04" height="40.09" fill="#ea5357" stroke="#151515" stroke-width="1.6"/>
<rect x="187.61" y="382.83" width="22.04" height="62.87" fill="#699ec9" stroke="#151515" stroke-width="1.6"/>
<rect x="187.61" y="348.66" width="22.04" height="34.17" fill="#ea5357" stroke="#151515" stroke-width="1.6"/>
<rect x="209.65" y="353.67" width="22.04" height="92.03" fill="#699ec9" stroke="#151515" stroke-width="1.6"/>
<rect x="209.65" y="308.56" width="22.04" height="45.10" fill="#ea5357" stroke="#151515" stroke-width="1.6"/>
<rect x="231.69" y="394.22" width="22.04" height="51.48" fill="#699ec9" stroke="#151515" stroke-width="1.6"/>
<rect x="231.69" y="364.60" width="22.04" height="29.61" fill="#ea5357" stroke="#151515" stroke-width="1.6"/>
<rect x="253.72" y="360.50" width="22.04" height="85.20" fill="#699ec9" stroke="#151515" stroke-width="1.6"/>
<rect x="253.72" y="329.07" width="22.04" height="31.44" fill="#ea5357" stroke="#151515" stroke-width="1.6"/>
<rect x="275.76" y="400.14" width="22.04" height="45.56" fill="#699ec9" stroke="#151515" stroke-width="1.6"/>
<rect x="275.76" y="385.11" width="22.04" height="15.03" fill="#ea5357" stroke="#151515" stroke-width="1.6"/>
<rect x="297.80" y="384.19" width="22.04" height="61.51" fill="#699ec9" stroke="#151515" stroke-width="1.6"/>
<rect x="297.80" y="366.43" width="22.04" height="17.77" fill="#ea5357" stroke="#151515" stroke-width="1.6"/>
<rect x="319.84" y="358.68" width="22.04" height="87.02" fill="#699ec9" stroke="#151515" stroke-width="1.6"/>
<rect x="319.84" y="330.89" width="22.04" height="27.79" fill="#ea5357" stroke="#151515" stroke-width="1.6"/>
<rect x="341.88" y="398.32" width="22.04" height="47.38" fill="#699ec9" stroke="#151515" stroke-width="1.6"/>
<rect x="341.88" y="386.93" width="22.04" height="11.39" fill="#ea5357" stroke="#151515" stroke-width="1.6"/>
<rect x="363.92" y="371.89" width="22.04" height="73.81" fill="#699ec9" stroke="#151515" stroke-width="1.6"/>
<rect x="363.92" y="350.48" width="22.04" height="21.41" fill="#ea5357" stroke="#151515" stroke-width="1.6"/>
<rect x="385.96" y="400.14" width="22.04" height="45.56" fill="#699ec9" stroke="#151515" stroke-width="1.6"/>
<rect x="385.96" y="385.11" width="22.04" height="15.03" fill="#ea5357" stroke="#151515" stroke-width="1.6"/>
<rect x="408.00" y="388.29" width="22.04" height="57.41" fill="#699ec9" stroke="#151515" stroke-width="1.6"/>
<rect x="408.00" y="375.99" width="22.04" height="12.30" fill="#ea5357" stroke="#151515" stroke-width="1.6"/>
<rect x="430.04" y="384.19" width="22.04" height="61.51" fill="#699ec9" stroke="#151515" stroke-width="1.6"/>
<rect x="430.04" y="366.43" width="22.04" height="17.77" fill="#ea5357" stroke="#151515" stroke-width="1.6"/>
<rect x="452.08" y="403.33" width="22.04" height="42.37" fill="#699ec9" stroke="#151515" stroke-width="1.6"/>
<rect x="452.08" y="391.03" width="22.04" height="12.30" fill="#ea5357" stroke="#151515" stroke-width="1.6"/>
<rect x="474.12" y="374.63" width="22.04" height="71.07" fill="#699ec9" stroke="#151515" stroke-width="1.6"/>
<rect x="474.12" y="354.12" width="22.04" height="20.50" fill="#ea5357" stroke="#151515" stroke-width="1.6"/>
<rect x="496.16" y="400.14" width="22.04" height="45.56" fill="#699ec9" stroke="#151515" stroke-width="1.6"/>
<rect x="496.16" y="395.13" width="22.04" height="5.01" fill="#ea5357" stroke="#151515" stroke-width="1.6"/>
<rect x="518.19" y="393.31" width="22.04" height="52.39" fill="#699ec9" stroke="#151515" stroke-width="1.6"/>
<rect x="518.19" y="381.00" width="22.04" height="12.30" fill="#ea5357" stroke="#151515" stroke-width="1.6"/>
<rect x="540.23" y="370.98" width="22.04" height="74.72" fill="#699ec9" stroke="#151515" stroke-width="1.6"/>
<rect x="540.23" y="355.49" width="22.04" height="15.49" fill="#ea5357" stroke="#151515" stroke-width="1.6"/>
<rect x="562.27" y="386.02" width="22.04" height="59.68" fill="#699ec9" stroke="#151515" stroke-width="1.6"/>
<rect x="562.27" y="379.18" width="22.04" height="6.83" fill="#ea5357" stroke="#151515" stroke-width="1.6"/>
<rect x="584.31" y="370.98" width="22.04" height="74.72" fill="#699ec9" stroke="#151515" stroke-width="1.6"/>
<rect x="584.31" y="353.67" width="22.04" height="17.31" fill="#ea5357" stroke="#151515" stroke-width="1.6"/>
<rect x="606.35" y="388.29" width="22.04" height="57.41" fill="#699ec9" stroke="#151515" stroke-width="1.6"/>
<rect x="606.35" y="380.09" width="22.04" height="8.20" fill="#ea5357" stroke="#151515" stroke-width="1.6"/>
<rect x="628.39" y="396.04" width="22.04" height="49.66" fill="#699ec9" stroke="#151515" stroke-width="1.6"/>
<rect x="628.39" y="388.29" width="22.04" height="7.75" fill="#ea5357" stroke="#151515" stroke-width="1.6"/>
<rect x="650.43" y="353.67" width="22.04" height="92.03" fill="#699ec9" stroke="#151515" stroke-width="1.6"/>
<rect x="650.43" y="345.47" width="22.04" height="8.20" fill="#ea5357" stroke="#151515" stroke-width="1.6"/>
<rect x="672.47" y="379.64" width="22.04" height="66.06" fill="#699ec9" stroke="#151515" stroke-width="1.6"/>
<rect x="672.47" y="376.90" width="22.04" height="2.73" fill="#ea5357" stroke="#151515" stroke-width="1.6"/>
<rect x="694.51" y="341.37" width="22.04" height="104.33" fill="#699ec9" stroke="#151515" stroke-width="1.6"/>
<rect x="694.51" y="325.88" width="22.04" height="15.49" fill="#ea5357" stroke="#151515" stroke-width="1.6"/>
<rect x="716.55" y="364.60" width="22.04" height="81.10" fill="#699ec9" stroke="#151515" stroke-width="1.6"/>
<rect x="716.55" y="357.77" width="22.04" height="6.83" fill="#ea5357" stroke="#151515" stroke-width="1.6"/>
<rect x="738.59" y="159.58" width="22.04" height="286.12" fill="#699ec9" stroke="#151515" stroke-width="1.6"/>
<rect x="738.59" y="149.56" width="22.04" height="10.02" fill="#ea5357" stroke="#151515" stroke-width="1.6"/>
<rect x="66.3" y="33.8" width="727.9000000000001" height="411.9" fill="none" stroke="#262626" stroke-width="1.2"/>
<line x1="99.45" y1="445.7" x2="99.45" y2="450.7" stroke="#262626" stroke-width="1.2"/>
<text x="99.45" y="465.9" text-anchor="middle" font-size="14.5" fill="#262626">0</text>
<line x1="191.28" y1="445.7" x2="191.28" y2="450.7" stroke="#262626" stroke-width="1.2"/>
<text x="191.28" y="465.9" text-anchor="middle" font-size="14.5" fill="#262626">10</text>
<line x1="283.11" y1="445.7" x2="283.11" y2="450.7" stroke="#262626" stroke-width="1.2"/>
<text x="283.11" y="465.9" text-anchor="middle" font-size="14.5" fill="#262626">20</text>
<line x1="374.94" y1="445.7" x2="374.94" y2="450.7" stroke="#262626" stroke-width="1.2"/>
<text x="374.94" y="465.9" text-anchor="middle" font-size="14.5" fill="#262626">30</text>
<line x1="466.77" y1="445.7" x2="466.77" y2="450.7" stroke="#262626" stroke-width="1.2"/>
<text x="466.77" y="465.9" text-anchor="middle" font-size="14.5" fill="#262626">40</text>
<line x1="558.60" y1="445.7" x2="558.60" y2="450.7" stroke="#262626" stroke-width="1.2"/>
<text x="558.60" y="465.9" text-anchor="middle" font-size="14.5" fill="#262626">50</text>
<line x1="650.43" y1="445.7" x2="650.43" y2="450.7" stroke="#262626" stroke-width="1.2"/>
<text x="650.43" y="465.9" text-anchor="middle" font-size="14.5" fill="#262626">60</text>
<line x1="742.26" y1="445.7" x2="742.26" y2="450.7" stroke="#262626" stroke-width="1.2"/>
<text x="742.26" y="465.9" text-anchor="middle" font-size="14.5" fill="#262626">70</text>
<line x1="61.3" y1="445.70" x2="66.3" y2="445.70" stroke="#262626" stroke-width="1.2"/>
<text x="56.3" y="450.80" text-anchor="end" font-size="14.5" letter-spacing="0.6" fill="#262626">0</text>
<line x1="61.3" y1="354.58" x2="66.3" y2="354.58" stroke="#262626" stroke-width="1.2"/>
<text x="56.3" y="359.68" text-anchor="end" font-size="14.5" letter-spacing="0.6" fill="#262626">200</text>
<line x1="61.3" y1="263.46" x2="66.3" y2="263.46" stroke="#262626" stroke-width="1.2"/>
<text x="56.3" y="268.56" text-anchor="end" font-size="14.5" letter-spacing="0.6" fill="#262626">400</text>
<line x1="61.3" y1="172.34" x2="66.3" y2="172.34" stroke="#262626" stroke-width="1.2"/>
<text x="56.3" y="177.44" text-anchor="end" font-size="14.5" letter-spacing="0.6" fill="#262626">600</text>
<line x1="61.3" y1="81.22" x2="66.3" y2="81.22" stroke="#262626" stroke-width="1.2"/>
<text x="56.3" y="86.32" text-anchor="end" font-size="14.5" letter-spacing="0.6" fill="#262626">800</text>
<text x="430" y="25.1" text-anchor="middle" font-size="18.85" fill="#262626">Distribution of Tenure by Churn Status</text>
<text x="430.25" y="486" text-anchor="middle" font-size="15.3" fill="#262626">Tenure (Months)</text>
<text transform="translate(19.5 239.75) rotate(-90)" x="0" y="0" text-anchor="middle" font-size="15.4" fill="#262626">Number of Customers</text>
<rect x="685" y="40.9" width="101.8" height="32.9" rx="3" fill="#fff" fill-opacity="0.8" stroke="#d6d6d6" stroke-width="1.2"/>
<text x="690.5" y="58.1" font-size="15.5" fill="#262626">Churn Status</text></svg>
<div style="position:absolute;left:44px;top:787px;width:805.7px;height:2px;background:#000;"></div>
<div style="position:absolute;left:846.7px;top:787px;width:2px;height:502px;background:#000;"></div>
<div style="position:absolute;left:44px;top:1287px;width:804.7px;height:2px;background:#000;"></div>
<div style="position:absolute;left:159px;top:717px;width:41.5px;height:41px;background:#fff;border:1.5px solid #7a7a7a;border-radius:8px;box-shadow:0 4px 10px rgba(0,0,0,0.12);"></div>
<svg style="left:0;top:0" width="220" height="800">
<rect x="171.5" y="726" width="19" height="4.5" fill="#555"/>
<path d="M171.5 730.5 L171.5 749.5 L190.5 749.5 L190.5 726" stroke="#444" stroke-width="1.4" fill="none"/>
<path d="M174 736 L190 736 M174 741 L190 741 M171.5 745.5 L190.5 745.5" stroke="#444" stroke-width="1.2" fill="none"/>
<path d="M165.5 728 L174.5 728 M170 723.5 L170 732.5" stroke="#1f9a4a" stroke-width="1.4" fill="none"/>
</svg>
<div style="position:absolute;left:979px;top:115px;width:32px;height:1195px;background:#eeeae8;"></div>
<div style="position:absolute;left:981px;top:115.2px;width:27.7px;height:1196px;background:#f6f5f4;border-radius:14px;"></div>
<svg style="left:0;top:0" width="1020" height="1365">
<path d="M995.1 125 L1000.8 132.8 L989.4 132.8 Z" fill="#777" stroke="#777" stroke-width="3" stroke-linejoin="round"/>
<path d="M995.1 1301.5 L1000.8 1293.7 L989.4 1293.7 Z" fill="#777" stroke="#777" stroke-width="3" stroke-linejoin="round"/>
</svg>
<div style="position:absolute;left:988.8px;top:512px;width:13.4px;height:728px;background:#717171;border-radius:7px;"></div>
<div style="position:absolute;left:1011px;top:115px;width:1px;height:1250px;background:#dcd8d6;"></div>
<div style="position:absolute;left:1012px;top:115px;width:16px;height:1250px;background:#f0f0f0;"></div>
<div style="position:absolute;left:1028px;top:115px;width:1020px;height:19px;background:#f0f0f0;"></div>
<div style="position:absolute;left:330px;top:1305px;width:150px;height:55px;background:#fff;"></div>
<div style="position:absolute;left:0px;top:1310px;width:345.9px;height:52.7px;background:linear-gradient(to right,#eae8e6 0px,#ebe8e6 500px,#eee8e6 1011px);background-size:1011px 100%;background-position:0 0;border-top-right-radius:9px;"></div>
<div style="position:absolute;left:466.3px;top:1310px;width:544.7px;height:52.7px;background:linear-gradient(to right,#eae8e6 0px,#ebe8e6 500px,#eee8e6 1011px);background-size:1011px 100%;background-position:-466.3px 0;border-top-left-radius:9px;"></div>
<div style="position:absolute;left:345.9px;top:1350px;width:120.4px;height:12.7px;background:linear-gradient(to right,#eae8e6 0px,#ebe8e6 500px,#eee8e6 1011px);background-size:1011px 100%;background-position:-345.9px 0;"></div>
<div style="position:absolute;left:345.9px;top:1309.8px;width:120.4px;height:45.8px;background:#fff;border-radius:0 0 8px 8px;box-shadow:0 1px 1.5px rgba(0,0,0,0.12);"></div>
<div style="position:absolute;left:0px;top:1362.7px;width:1011px;height:3px;background:#f1f0ef;"></div>
<div style="position:absolute;left:193px;top:1327.37px;font:normal 22px 'Liberation Sans', sans-serif;color:#333;white-space:pre;line-height:1;">Telco_Churn</div>
<div style="position:absolute;left:359.5px;top:1322.3px;font:bold 21.5px 'Liberation Sans', sans-serif;color:#1a1a1a;white-space:pre;line-height:1;letter-spacing:-0.6px;">Analysis1</div>
<div style="position:absolute;left:359px;top:1348px;width:94px;height:3.2px;background:#217346;border-radius:1px;"></div>
<div style="position:absolute;left:338.5px;top:1321.5px;width:1px;height:27px;background:#c8c6c4;"></div>
<div style="position:absolute;left:473px;top:1321.5px;width:1px;height:27px;background:#c8c6c4;"></div>
<svg style="left:0;top:0" width="1020" height="1365">
<path d="M42.6 1327.4 L35.4 1334.8 L42.6 1342.2" stroke="#8c8c8c" stroke-width="2" fill="none"/>
<path d="M89.2 1327.4 L96.4 1334.8 L89.2 1342.2" stroke="#8c8c8c" stroke-width="2" fill="none"/>
<path d="M552.2 1326 L552.2 1343.8 M543.4 1334.9 L561 1334.9" stroke="#454545" stroke-width="1.8" fill="none"/>
<rect x="612" y="1328.4" width="3.6" height="3.6" rx="0.6" fill="#3a3a3a"/><rect x="612" y="1335.1" width="3.6" height="3.6" rx="0.6" fill="#3a3a3a"/><rect x="612" y="1341.8" width="3.6" height="3.6" rx="0.6" fill="#3a3a3a"/>
</svg>
<div style="position:absolute;left:640.5px;top:1322px;width:340px;height:26.6px;background:#f6f5f4;border-radius:13px;"></div>
<div style="position:absolute;left:667.7px;top:1328.5px;width:144px;height:13.2px;background:#707070;border-radius:7px;"></div>
<svg style="left:0;top:0" width="1020" height="1365">
<path d="M650 1335 L657.5 1330 L657.5 1340 Z" fill="#707070" stroke="#707070" stroke-width="3" stroke-linejoin="round"/>
<path d="M971 1335.4 L963.5 1330.4 L963.5 1340.4 Z" fill="#707070" stroke="#707070" stroke-width="3" stroke-linejoin="round"/>
</svg>
<div style="position:absolute;left:1028.2px;top:133.9px;width:1002.5999999999999px;height:1208.6999999999998px;background:#ebe9e7;"></div>
<div style="position:absolute;left:1012px;top:1342.6px;width:1036px;height:22.40000000000009px;background:#f0f0f0;"></div>
<div style="position:absolute;left:2030.8px;top:115px;width:17.200000000000045px;height:1250px;background:#f0f0f0;"></div>
<svg style="left:0;top:0" width="2048" height="220">
<path d="M1041 159.5 L1067.5 159.5 M1041 168 L1067.5 168 M1041 176.5 L1067.5 176.5" stroke="#3a3a3a" stroke-width="1.6" fill="none"/>
</svg>
<div style="position:absolute;left:1088px;top:156.78px;font:normal 26.6px 'Liberation Sans', sans-serif;color:#1f1f1f;white-space:pre;line-height:1;-webkit-text-stroke:0.6px #1f1f1f;letter-spacing:0.1px;">Copilot</div>
<div style="position:absolute;left:1873.6px;top:142.9px;width:51.8px;height:51.8px;background:#f6f5f4;border-radius:7px;"></div>
<svg style="left:0;top:0" width="2048" height="220">
<path d="M1889.3 176 A12.4 12.4 0 1 1 1893.5 179.6 L1886.8 181.4 Z" stroke="#3a3a3a" stroke-width="1.7" fill="none" stroke-linejoin="round"/>
<path d="M1893.2 168.9 L1905.8 168.9 M1899.5 162.6 L1899.5 175.2" stroke="#3a3a3a" stroke-width="1.7" fill="none"/>
<path d="M1948.8 158.6 L1958.5 168.5 L1968.3 158.6" stroke="#3a3a3a" stroke-width="1.7" fill="none"/>
<path d="M2001.5 152.6 L2020.6 171.7 M2020.6 152.6 L2001.5 171.7" stroke="#3a3a3a" stroke-width="1.7" fill="none"/>
</svg>
<div style="position:absolute;left:1078.2px;top:200.3px;width:884.2px;height:372.90000000000003px;overflow:hidden;"><svg style="left:0.5px;top:-176.0px;font-family:'Liberation Sans', sans-serif" width="884.3653" height="549.9395999999999" viewBox="0 0 804.7 500.4"><rect x="0" y="0" width="804.7" height="500.4" fill="#fff"/>
<rect x="99.45" y="282.60" width="22.04" height="163.10" fill="#699ec9" stroke="#151515" stroke-width="1.6"/>
<rect x="99.45" y="53.88" width="22.04" height="228.71" fill="#ea5357" stroke="#151515" stroke-width="1.6"/>
<rect x="121.49" y="355.49" width="22.04" height="90.21" fill="#699ec9" stroke="#151515" stroke-width="1.6"/>
<rect x="121.49" y="275.31" width="22.04" height="80.19" fill="#ea5357" stroke="#151515" stroke-width="1.6"/>
<rect x="143.53" y="346.83" width="22.04" height="98.87" fill="#699ec9" stroke="#151515" stroke-width="1.6"/>
<rect x="143.53" y="276.22" width="22.04" height="70.62" fill="#ea5357" stroke="#151515" stroke-width="1.6"/>
<rect x="165.57" y="375.99" width="22.04" height="69.71" fill="#699ec9" stroke="#151515" stroke-width="1.6"/>
<rect x="165.57" y="335.90" width="22.04" height="40.09" fill="#ea5357" stroke="#151515" stroke-width="1.6"/>
<rect x="187.61" y="382.83" width="22.04" height="62.87" fill="#699ec9" stroke="#151515" stroke-width="1.6"/>
<rect x="187.61" y="348.66" width="22.04" height="34.17" fill="#ea5357" stroke="#151515" stroke-width="1.6"/>
<rect x="209.65" y="353.67" width="22.04" height="92.03" fill="#699ec9" stroke="#151515" stroke-width="1.6"/>
<rect x="209.65" y="308.56" width="22.04" height="45.10" fill="#ea5357" stroke="#151515" stroke-width="1.6"/>
<rect x="231.69" y="394.22" width="22.04" height="51.48" fill="#699ec9" stroke="#151515" stroke-width="1.6"/>
<rect x="231.69" y="364.60" width="22.04" height="29.61" fill="#ea5357" stroke="#151515" stroke-width="1.6"/>
<rect x="253.72" y="360.50" width="22.04" height="85.20" fill="#699ec9" stroke="#151515" stroke-width="1.6"/>
<rect x="253.72" y="329.07" width="22.04" height="31.44" fill="#ea5357" stroke="#151515" stroke-width="1.6"/>
<rect x="275.76" y="400.14" width="22.04" height="45.56" fill="#699ec9" stroke="#151515" stroke-width="1.6"/>
<rect x="275.76" y="385.11" width="22.04" height="15.03" fill="#ea5357" stroke="#151515" stroke-width="1.6"/>
<rect x="297.80" y="384.19" width="22.04" height="61.51" fill="#699ec9" stroke="#151515" stroke-width="1.6"/>
<rect x="297.80" y="366.43" width="22.04" height="17.77" fill="#ea5357" stroke="#151515" stroke-width="1.6"/>
<rect x="319.84" y="358.68" width="22.04" height="87.02" fill="#699ec9" stroke="#151515" stroke-width="1.6"/>
<rect x="319.84" y="330.89" width="22.04" height="27.79" fill="#ea5357" stroke="#151515" stroke-width="1.6"/>
<rect x="341.88" y="398.32" width="22.04" height="47.38" fill="#699ec9" stroke="#151515" stroke-width="1.6"/>
<rect x="341.88" y="386.93" width="22.04" height="11.39" fill="#ea5357" stroke="#151515" stroke-width="1.6"/>
<rect x="363.92" y="371.89" width="22.04" height="73.81" fill="#699ec9" stroke="#151515" stroke-width="1.6"/>
<rect x="363.92" y="350.48" width="22.04" height="21.41" fill="#ea5357" stroke="#151515" stroke-width="1.6"/>
<rect x="385.96" y="400.14" width="22.04" height="45.56" fill="#699ec9" stroke="#151515" stroke-width="1.6"/>
<rect x="385.96" y="385.11" width="22.04" height="15.03" fill="#ea5357" stroke="#151515" stroke-width="1.6"/>
<rect x="408.00" y="388.29" width="22.04" height="57.41" fill="#699ec9" stroke="#151515" stroke-width="1.6"/>
<rect x="408.00" y="375.99" width="22.04" height="12.30" fill="#ea5357" stroke="#151515" stroke-width="1.6"/>
<rect x="430.04" y="384.19" width="22.04" height="61.51" fill="#699ec9" stroke="#151515" stroke-width="1.6"/>
<rect x="430.04" y="366.43" width="22.04" height="17.77" fill="#ea5357" stroke="#151515" stroke-width="1.6"/>
<rect x="452.08" y="403.33" width="22.04" height="42.37" fill="#699ec9" stroke="#151515" stroke-width="1.6"/>
<rect x="452.08" y="391.03" width="22.04" height="12.30" fill="#ea5357" stroke="#151515" stroke-width="1.6"/>
<rect x="474.12" y="374.63" width="22.04" height="71.07" fill="#699ec9" stroke="#151515" stroke-width="1.6"/>
<rect x="474.12" y="354.12" width="22.04" height="20.50" fill="#ea5357" stroke="#151515" stroke-width="1.6"/>
<rect x="496.16" y="400.14" width="22.04" height="45.56" fill="#699ec9" stroke="#151515" stroke-width="1.6"/>
<rect x="496.16" y="395.13" width="22.04" height="5.01" fill="#ea5357" stroke="#151515" stroke-width="1.6"/>
<rect x="518.19" y="393.31" width="22.04" height="52.39" fill="#699ec9" stroke="#151515" stroke-width="1.6"/>
<rect x="518.19" y="381.00" width="22.04" height="12.30" fill="#ea5357" stroke="#151515" stroke-width="1.6"/>
<rect x="540.23" y="370.98" width="22.04" height="74.72" fill="#699ec9" stroke="#151515" stroke-width="1.6"/>
<rect x="540.23" y="355.49" width="22.04" height="15.49" fill="#ea5357" stroke="#151515" stroke-width="1.6"/>
<rect x="562.27" y="386.02" width="22.04" height="59.68" fill="#699ec9" stroke="#151515" stroke-width="1.6"/>
<rect x="562.27" y="379.18" width="22.04" height="6.83" fill="#ea5357" stroke="#151515" stroke-width="1.6"/>
<rect x="584.31" y="370.98" width="22.04" height="74.72" fill="#699ec9" stroke="#151515" stroke-width="1.6"/>
<rect x="584.31" y="353.67" width="22.04" height="17.31" fill="#ea5357" stroke="#151515" stroke-width="1.6"/>
<rect x="606.35" y="388.29" width="22.04" height="57.41" fill="#699ec9" stroke="#151515" stroke-width="1.6"/>
<rect x="606.35" y="380.09" width="22.04" height="8.20" fill="#ea5357" stroke="#151515" stroke-width="1.6"/>
<rect x="628.39" y="396.04" width="22.04" height="49.66" fill="#699ec9" stroke="#151515" stroke-width="1.6"/>
<rect x="628.39" y="388.29" width="22.04" height="7.75" fill="#ea5357" stroke="#151515" stroke-width="1.6"/>
<rect x="650.43" y="353.67" width="22.04" height="92.03" fill="#699ec9" stroke="#151515" stroke-width="1.6"/>
<rect x="650.43" y="345.47" width="22.04" height="8.20" fill="#ea5357" stroke="#151515" stroke-width="1.6"/>
<rect x="672.47" y="379.64" width="22.04" height="66.06" fill="#699ec9" stroke="#151515" stroke-width="1.6"/>
<rect x="672.47" y="376.90" width="22.04" height="2.73" fill="#ea5357" stroke="#151515" stroke-width="1.6"/>
<rect x="694.51" y="341.37" width="22.04" height="104.33" fill="#699ec9" stroke="#151515" stroke-width="1.6"/>
<rect x="694.51" y="325.88" width="22.04" height="15.49" fill="#ea5357" stroke="#151515" stroke-width="1.6"/>
<rect x="716.55" y="364.60" width="22.04" height="81.10" fill="#699ec9" stroke="#151515" stroke-width="1.6"/>
<rect x="716.55" y="357.77" width="22.04" height="6.83" fill="#ea5357" stroke="#151515" stroke-width="1.6"/>
<rect x="738.59" y="159.58" width="22.04" height="286.12" fill="#699ec9" stroke="#151515" stroke-width="1.6"/>
<rect x="738.59" y="149.56" width="22.04" height="10.02" fill="#ea5357" stroke="#151515" stroke-width="1.6"/>
<rect x="66.3" y="33.8" width="727.9000000000001" height="411.9" fill="none" stroke="#262626" stroke-width="1.2"/>
<line x1="99.45" y1="445.7" x2="99.45" y2="450.7" stroke="#262626" stroke-width="1.2"/>
<text x="99.45" y="465.9" text-anchor="middle" font-size="14.5" fill="#262626">0</text>
<line x1="191.28" y1="445.7" x2="191.28" y2="450.7" stroke="#262626" stroke-width="1.2"/>
<text x="191.28" y="465.9" text-anchor="middle" font-size="14.5" fill="#262626">10</text>
<line x1="283.11" y1="445.7" x2="283.11" y2="450.7" stroke="#262626" stroke-width="1.2"/>
<text x="283.11" y="465.9" text-anchor="middle" font-size="14.5" fill="#262626">20</text>
<line x1="374.94" y1="445.7" x2="374.94" y2="450.7" stroke="#262626" stroke-width="1.2"/>
<text x="374.94" y="465.9" text-anchor="middle" font-size="14.5" fill="#262626">30</text>
<line x1="466.77" y1="445.7" x2="466.77" y2="450.7" stroke="#262626" stroke-width="1.2"/>
<text x="466.77" y="465.9" text-anchor="middle" font-size="14.5" fill="#262626">40</text>
<line x1="558.60" y1="445.7" x2="558.60" y2="450.7" stroke="#262626" stroke-width="1.2"/>
<text x="558.60" y="465.9" text-anchor="middle" font-size="14.5" fill="#262626">50</text>
<line x1="650.43" y1="445.7" x2="650.43" y2="450.7" stroke="#262626" stroke-width="1.2"/>
<text x="650.43" y="465.9" text-anchor="middle" font-size="14.5" fill="#262626">60</text>
<line x1="742.26" y1="445.7" x2="742.26" y2="450.7" stroke="#262626" stroke-width="1.2"/>
<text x="742.26" y="465.9" text-anchor="middle" font-size="14.5" fill="#262626">70</text>
<line x1="61.3" y1="445.70" x2="66.3" y2="445.70" stroke="#262626" stroke-width="1.2"/>
<text x="56.3" y="450.80" text-anchor="end" font-size="14.5" letter-spacing="0.6" fill="#262626">0</text>
<line x1="61.3" y1="354.58" x2="66.3" y2="354.58" stroke="#262626" stroke-width="1.2"/>
<text x="56.3" y="359.68" text-anchor="end" font-size="14.5" letter-spacing="0.6" fill="#262626">200</text>
<line x1="61.3" y1="263.46" x2="66.3" y2="263.46" stroke="#262626" stroke-width="1.2"/>
<text x="56.3" y="268.56" text-anchor="end" font-size="14.5" letter-spacing="0.6" fill="#262626">400</text>
<line x1="61.3" y1="172.34" x2="66.3" y2="172.34" stroke="#262626" stroke-width="1.2"/>
<text x="56.3" y="177.44" text-anchor="end" font-size="14.5" letter-spacing="0.6" fill="#262626">600</text>
<line x1="61.3" y1="81.22" x2="66.3" y2="81.22" stroke="#262626" stroke-width="1.2"/>
<text x="56.3" y="86.32" text-anchor="end" font-size="14.5" letter-spacing="0.6" fill="#262626">800</text>
<text x="430" y="25.1" text-anchor="middle" font-size="18.85" fill="#262626">Distribution of Tenure by Churn Status</text>
<text x="430.25" y="486" text-anchor="middle" font-size="15.3" fill="#262626">Tenure (Months)</text>
<text transform="translate(19.5 239.75) rotate(-90)" x="0" y="0" text-anchor="middle" font-size="15.4" fill="#262626">Number of Customers</text>
<rect x="685" y="40.9" width="101.8" height="32.9" rx="3" fill="#fff" fill-opacity="0.8" stroke="#d6d6d6" stroke-width="1.2"/>
<text x="690.5" y="58.1" font-size="15.5" fill="#262626">Churn Status</text></svg></div>
<div style="position:absolute;left:2013.4px;top:200.7px;width:17px;height:819.3px;background:#f3f2f1;border-radius:8px 8px 0 0;"></div>
<div style="position:absolute;left:2015.8px;top:1020px;width:11.9px;height:189px;background:#676767;border-radius:6px;"></div>
<div style="position:absolute;left:1078.8px;top:593.4px;width:285.6px;height:37.4px;background:#eeecea;border:1.2px solid #cfcdcb;border-radius:5px;"></div>
<svg style="left:0;top:0" width="2048" height="1365">
<path d="M1108.8 602.5 L1108.8 621 M1099.6 611.7 L1118 611.7" stroke="#333" stroke-width="1.7" fill="none"/>
</svg>
<div style="position:absolute;left:1136px;top:604.79px;font:normal 19.5px 'Liberation Sans', sans-serif;color:#262626;white-space:pre;line-height:1;">Add results to new sheet</div>
<svg style="left:0;top:0" width="2048" height="1365">
<g transform="translate(1080 645.0)" stroke="#3c3c3c" stroke-width="1.55" fill="none" stroke-linejoin="round" stroke-linecap="round">
<path d="M20.8 16.9 L24.3 16.6 Q27.8 16.8 27.3 20.5 L25.4 27.4 Q24.3 30.8 21.2 30.2 L11.9 27.6 Q8.5 26.4 8.4 22.8 Q8.6 20.2 11.6 18.8 Q14.6 17.2 16 14.3 L18.5 9.2 Q19.7 7.6 21.2 8.6 Q22.6 9.8 22.2 12.5 Z"/>
<path d="M60.6 22.2 L63 21.5 Q66.3 20.6 65.8 17 L65 12.8 Q64 8.8 60 9.6 L50.5 12.2 Q47.9 13 48 16 Q48.2 18.4 50.5 19.3 Q54.5 21.5 56.8 27 L58 29.6 Q59.2 31.3 60.3 29.8 Q61 28.6 60.8 25 Z"/>
</g></svg>
<svg style="left:1074px;top:698px" width="42" height="38" viewBox="0 0 42 38">
<defs>
<linearGradient id="lgL" x1="0" y1="0" x2="0" y2="1"><stop offset="0" stop-color="#2a97d6"/><stop offset="0.38" stop-color="#2a93cf"/><stop offset="0.5" stop-color="#3f9a7a"/><stop offset="0.62" stop-color="#5e9c5e"/><stop offset="0.78" stop-color="#c9c22c"/><stop offset="1" stop-color="#c8c02a"/></linearGradient>
<linearGradient id="lgR" x1="0" y1="0" x2="0" y2="1"><stop offset="0" stop-color="#c55ca9"/><stop offset="0.45" stop-color="#c75ea4"/><stop offset="0.6" stop-color="#f0706a"/><stop offset="0.8" stop-color="#f29a66"/><stop offset="1" stop-color="#f0a060"/></linearGradient>
</defs>
<path d="M10.8 7.2 Q11.5 5.8 13 5.8 L25.8 5.8 Q27.6 5.8 28.3 7.6 L30.6 13.6 L23 13.6 Q21.2 13.6 20.6 15.3 L17.6 24.3 L7.6 24.3 Q5.6 24.3 6 22 L10.8 7.2 Z" fill="url(#lgL)"/>
<path d="M21.5 5.8 L25.8 5.8 Q27.6 5.8 28.3 7.6 L30.6 13.6 L22 13.6 Q20.5 12 21.5 5.8 Z" fill="#1f4fc6" opacity="0.9"/>
<path d="M24.8 13.6 L32.6 13.6 Q34.8 13.6 34.4 16 L31.6 27.8 Q30.6 31.7 27.2 31.7 L18.2 31.7 Q16.3 31.7 15.8 29.8 L14.2 24.3 L19.2 24.3 Q20.6 24.3 21.2 22.6 L23.4 15.2 Q23.8 13.6 24.8 13.6 Z" fill="url(#lgR)"/>
<path d="M14.2 24.3 L19.5 24.3 Q20.2 24.3 20.4 24.8 L17.6 31.7 Q16.3 31.7 15.8 29.8 Z" fill="#e85050"/>
</svg>
<div style="position:absolute;left:1125px;top:706.02px;font:normal 23.6px 'Liberation Sans', sans-serif;color:#1f1f1f;white-space:pre;line-height:1;-webkit-text-stroke:0.55px #1f1f1f;">Copilot</div>
<div style="position:absolute;left:1220px;top:712.03px;font:normal 16.5px 'Liberation Sans', sans-serif;color:#707070;white-space:pre;line-height:1;">AI-generated content may be incorrect</div>
<div style="position:absolute;left:1078px;top:760.2px;font:normal 22.8px 'Liberation Sans', sans-serif;color:#242424;white-space:pre;line-height:1;">The histogram visually compares how long customers stay with the company based</div>
<div style="position:absolute;left:1078px;top:793.2px;font:normal 22.8px 'Liberation Sans', sans-serif;color:#242424;white-space:pre;line-height:1;">on whether they have churned or not. You can see how the length of time as a</div>
<div style="position:absolute;left:1078px;top:826.2px;font:normal 22.8px 'Liberation Sans', sans-serif;color:#242424;white-space:pre;line-height:1;">customer is different for those who left versus those who stayed.</div>
<svg style="left:0;top:0" width="2048" height="1365">
<g transform="translate(1080 874.9)" stroke="#3c3c3c" stroke-width="1.55" fill="none" stroke-linejoin="round" stroke-linecap="round">
<path d="M20.8 16.9 L24.3 16.6 Q27.8 16.8 27.3 20.5 L25.4 27.4 Q24.3 30.8 21.2 30.2 L11.9 27.6 Q8.5 26.4 8.4 22.8 Q8.6 20.2 11.6 18.8 Q14.6 17.2 16 14.3 L18.5 9.2 Q19.7 7.6 21.2 8.6 Q22.6 9.8 22.2 12.5 Z"/>
<path d="M60.6 22.2 L63 21.5 Q66.3 20.6 65.8 17 L65 12.8 Q64 8.8 60 9.6 L50.5 12.2 Q47.9 13 48 16 Q48.2 18.4 50.5 19.3 Q54.5 21.5 56.8 27 L58 29.6 Q59.2 31.3 60.3 29.8 Q61 28.6 60.8 25 Z"/>
</g></svg>
<svg style="left:0;top:0" width="2048" height="1365">
<path d="M1428.3 971.9 L1416 971.9 Q1412.4 971.9 1412.4 975.5 L1412.4 989.8 Q1412.4 993.4 1416 993.4 L1428.3 993.4" stroke="#444" stroke-width="1.7" fill="none" stroke-linecap="round"/>
<path d="M1419.5 982.4 L1436.3 982.4 M1430.3 976.4 L1436.3 982.4 L1430.3 988.4" stroke="#444" stroke-width="1.7" fill="none" stroke-linecap="round" stroke-linejoin="round"/>
</svg>
<div style="position:absolute;left:1446.5px;top:975.21px;font:normal 19px 'Liberation Sans', sans-serif;color:#3a3a3a;white-space:pre;line-height:1;">Stop advanced analysis</div>
<div style="position:absolute;left:1078.8px;top:1078px;width:471px;height:42.3px;border:2px solid #62bb80;border-radius:11px;"></div>
<div style="position:absolute;left:1093.4px;top:1091.33px;font:normal 19.45px 'Liberation Sans', sans-serif;color:#424242;white-space:pre;line-height:1;">Show the average monthly charges by churn status</div>
<div style="position:absolute;left:1078.8px;top:1134.4px;width:583.4px;height:41.2px;border:2px solid #62bb80;border-radius:11px;"></div>
<div style="position:absolute;left:1093.4px;top:1146.74px;font:normal 19.8px 'Liberation Sans', sans-serif;color:#424242;white-space:pre;line-height:1;">Display the distribution of contract types for churned customers</div>
<div style="position:absolute;left:1078.3px;top:1212.8px;width:902.1px;height:88.6px;background:#fefefe;border:1.6px solid #d3d1cf;border-radius:25px;box-shadow:0 1.5px 2px rgba(0,0,0,0.10);"></div>
<div style="position:absolute;left:1106px;top:1247.06px;font:normal 22.6px 'Liberation Sans', sans-serif;color:#747474;white-space:pre;line-height:1;">Message Copilot</div>
<svg style="left:0;top:0" width="2048" height="1365">
<g stroke="#404040" stroke-width="1.8" fill="none" stroke-linecap="round" stroke-linejoin="round">
<path d="M1877.1 1246 Q1876.2 1243.6 1873.6 1243.8 Q1870.9 1244.1 1870.3 1246.8 Q1866.4 1247.8 1866.4 1251.6 Q1866.5 1253.7 1867.9 1254.9 Q1864.6 1256.2 1864.6 1259.8 Q1864.9 1263.2 1868.4 1264.3 Q1869 1268.4 1872.9 1269.3 Q1875.7 1269.6 1877.1 1267.4 Z"/>
<path d="M1877.1 1246 Q1878 1243.6 1880.6 1243.8 Q1883.3 1244.1 1883.9 1246.8 Q1887.8 1247.8 1887.9 1251.6 Q1887.8 1253.9 1886.6 1255 Q1890 1256.4 1890 1259.8 Q1889.7 1263.2 1886.2 1264.3 Q1885.6 1268.4 1881.5 1269.3 Q1878.6 1269.6 1877.1 1267.4"/>
<path d="M1875 1251 L1877.1 1251 M1867.9 1254.9 L1871.2 1254.9 Q1873 1255 1873 1256.8 L1873 1258.9 M1883.1 1257.6 L1883.1 1259.3 Q1883 1261.5 1880.9 1261.5 L1877.1 1261.5"/>
<circle cx="1873" cy="1250.9" r="1.9"/><circle cx="1883.1" cy="1255.7" r="1.9"/><circle cx="1873" cy="1260.8" r="1.9"/>
<path d="M1924.6 1248.7 Q1924.6 1243.3 1929.8 1243.3 Q1935 1243.3 1935 1248.7 L1935 1256.1 Q1935 1261.5 1929.8 1261.5 Q1924.6 1261.5 1924.6 1256.1 Z"/>
<path d="M1920.6 1255.4 C1920.6 1261.6 1924.6 1265.6 1929.8 1265.6 C1935 1265.6 1939 1261.6 1939 1255.4 M1929.8 1265.6 L1929.8 1269.8"/>
</g></svg>
<div style="position:absolute;left:0px;top:1363.2px;width:2048px;height:1.8px;background:#f8f7f7;"></div>
</body></html>
